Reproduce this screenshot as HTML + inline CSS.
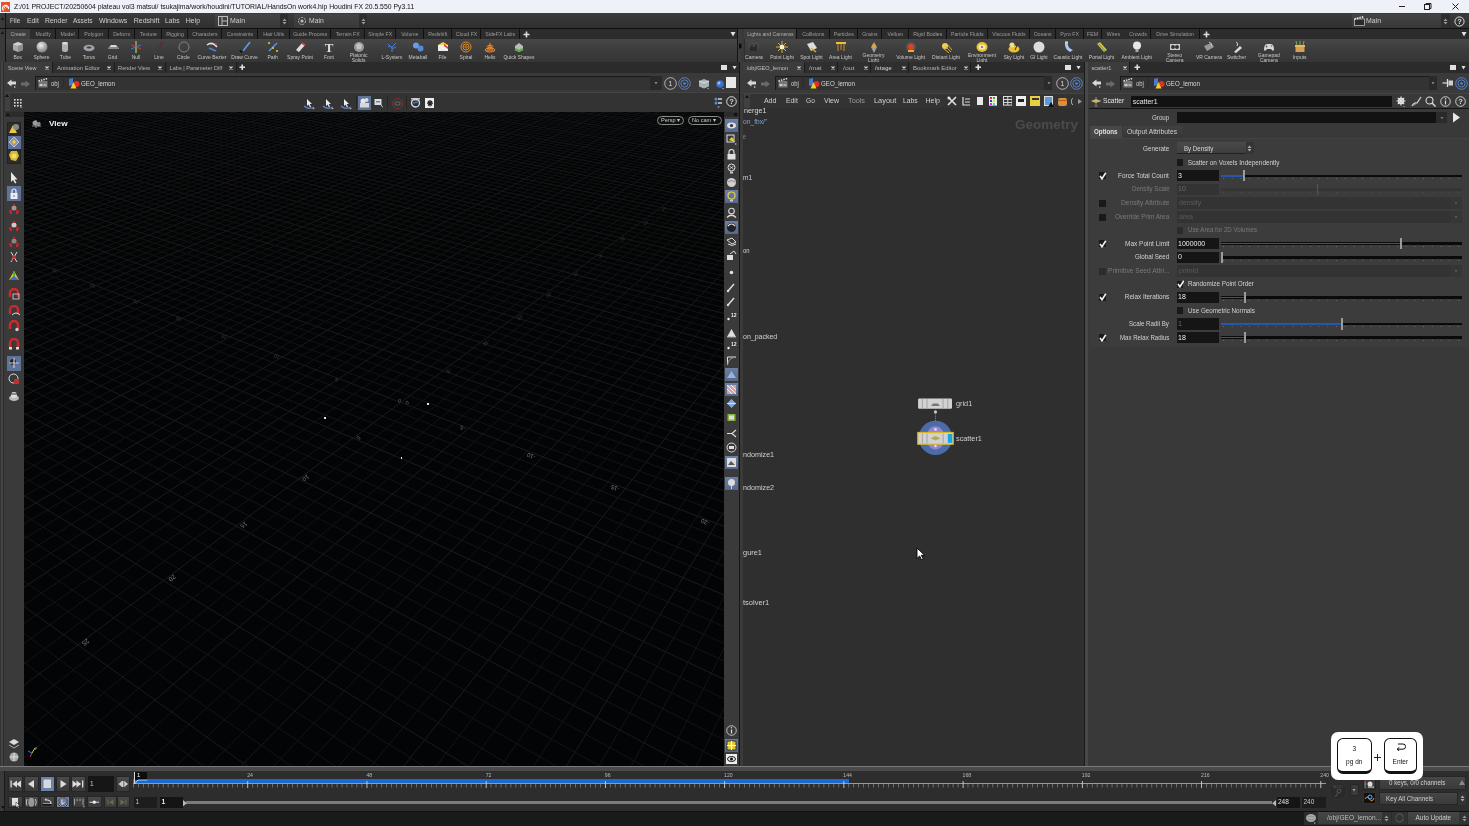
<!DOCTYPE html><html><head><meta charset="utf-8"><style>
html,body{margin:0;padding:0;}
body{width:1469px;height:826px;overflow:hidden;position:relative;background:#3a3a3a;font-family:"Liberation Sans",sans-serif;}
#r>div,#r>svg{position:absolute;box-sizing:border-box;}
#r{position:absolute;left:0;top:0;width:1469px;height:826px;overflow:hidden;will-change:transform;}
</style></head><body><div id="r">
<div style="left:0px;top:0px;width:1469px;height:13px;background:#eef1f7"></div>
<svg style="left:1px;top:1.5px;" width="9" height="10" viewBox="0 0 9 10"><rect x="0" y="0" width="9" height="10" fill="#e5532d"/><path d="M2.5 8.5 A3 3 0 1 1 7.5 7" stroke="#fff" stroke-width="1.2" fill="none"/><path d="M4 6.5 A1.3 1.3 0 1 1 6 6" stroke="#fff" stroke-width="1" fill="none"/></svg>
<div style="left:13.90px;top:0.10px;height:13px;line-height:13px;font-size:7.6px;color:#101010;white-space:nowrap;transform:scaleX(0.901);transform-origin:0 50%;">Z:/01 PROJECT/20250604 plateau vol3 matsui/ tsukajima/work/houdini/TUTORIAL/HandsOn work4.hip   Houdini FX 20.5.550   Py3.11</div>
<div style="left:1399px;top:6px;width:5.5px;height:1px;background:#222"></div>
<svg style="left:1424px;top:3px;" width="8" height="7" viewBox="0 0 8 7"><rect x="0.5" y="1.5" width="5" height="5" fill="none" stroke="#222" stroke-width="1"/><path d="M2 1.5 V0.5 H7 V5.5 H6" fill="none" stroke="#222" stroke-width="1"/></svg>
<svg style="left:1451.5px;top:2.5px;" width="7" height="7" viewBox="0 0 7 7"><path d="M0.5 0.5 L6.5 6.5 M6.5 0.5 L0.5 6.5" stroke="#222" stroke-width="1"/></svg>
<div style="left:0px;top:13px;width:5px;height:798px;background:#3a3a3a"></div>
<div style="left:5px;top:13px;width:1px;height:798px;background:#121212"></div>
<div style="left:6px;top:13px;width:1463px;height:15px;background:linear-gradient(#3b3b3b,#2f2f2f)"></div>
<div style="left:0px;top:28px;width:1469px;height:1.3px;background:#101010"></div>
<div style="left:9.80px;top:14.60px;height:12px;line-height:12px;font-size:7px;color:#cfcfcf;white-space:nowrap;transform:scaleX(0.904);transform-origin:0 50%;">File</div>
<div style="left:26.60px;top:14.60px;height:12px;line-height:12px;font-size:7px;color:#cfcfcf;white-space:nowrap;transform:scaleX(0.978);transform-origin:0 50%;">Edit</div>
<div style="left:44.50px;top:14.60px;height:12px;line-height:12px;font-size:7px;color:#cfcfcf;white-space:nowrap;transform:scaleX(0.980);transform-origin:0 50%;">Render</div>
<div style="left:73.10px;top:14.60px;height:12px;line-height:12px;font-size:7px;color:#cfcfcf;white-space:nowrap;transform:scaleX(0.933);transform-origin:0 50%;">Assets</div>
<div style="left:98.90px;top:14.60px;height:12px;line-height:12px;font-size:7px;color:#cfcfcf;white-space:nowrap;">Windows</div>
<div style="left:133.70px;top:14.60px;height:12px;line-height:12px;font-size:7px;color:#cfcfcf;white-space:nowrap;">Redshift</div>
<div style="left:164.90px;top:14.60px;height:12px;line-height:12px;font-size:7px;color:#cfcfcf;white-space:nowrap;transform:scaleX(0.962);transform-origin:0 50%;">Labs</div>
<div style="left:185.70px;top:14.60px;height:12px;line-height:12px;font-size:7px;color:#cfcfcf;white-space:nowrap;">Help</div>
<div style="left:214.7px;top:13.7px;width:65.60000000000002px;height:14.100000000000001px;background:linear-gradient(#444,#383838)"></div>
<div style="left:280.3px;top:13.7px;width:7.899999999999977px;height:14.100000000000001px;background:#2e2e2e"></div>
<svg style="left:282.3px;top:17.7px;" width="5" height="7" viewBox="0 0 5 7"><path d="M0.5 3 L2.5 0.5 L4.5 3 Z M0.5 4 L2.5 6.5 L4.5 4 Z" fill="#9a9a9a"/></svg>
<div style="left:230.00px;top:14.95px;height:12px;line-height:12px;font-size:7px;color:#cfcfcf;white-space:nowrap;transform:scaleX(0.989);transform-origin:0 50%;">Main</div>

<svg style="left:217.5px;top:16px;" width="10" height="10" viewBox="0 0 10 10"><rect x="0.5" y="0.5" width="9" height="9" fill="none" stroke="#bbb"/><path d="M4 0.5 V9.5 M4 5 H9.5" stroke="#bbb"/></svg>
<div style="left:293.7px;top:13.7px;width:65.0px;height:14.100000000000001px;background:linear-gradient(#444,#383838)"></div>
<div style="left:358.7px;top:13.7px;width:8.0px;height:14.100000000000001px;background:#2e2e2e"></div>
<svg style="left:360.7px;top:17.7px;" width="5" height="7" viewBox="0 0 5 7"><path d="M0.5 3 L2.5 0.5 L4.5 3 Z M0.5 4 L2.5 6.5 L4.5 4 Z" fill="#9a9a9a"/></svg>
<div style="left:308.50px;top:14.95px;height:12px;line-height:12px;font-size:7px;color:#cfcfcf;white-space:nowrap;transform:scaleX(0.969);transform-origin:0 50%;">Main</div>

<svg style="left:296.5px;top:16px;" width="10" height="10" viewBox="0 0 10 10"><circle cx="5" cy="5" r="3.5" fill="none" stroke="#bbb" stroke-dasharray="2 1"/><circle cx="5" cy="5" r="1.6" fill="#bbb"/></svg>
<div style="left:1351.9px;top:14px;width:89.09999999999991px;height:13.7px;background:linear-gradient(#444,#383838)"></div>
<div style="left:1441px;top:14px;width:8.700000000000045px;height:13.7px;background:#2e2e2e"></div>
<svg style="left:1443px;top:18px;" width="5" height="7" viewBox="0 0 5 7"><path d="M0.5 3 L2.5 0.5 L4.5 3 Z M0.5 4 L2.5 6.5 L4.5 4 Z" fill="#9a9a9a"/></svg>
<div style="left:1366.30px;top:15.05px;height:12px;line-height:12px;font-size:7px;color:#cfcfcf;white-space:nowrap;transform:scaleX(0.989);transform-origin:0 50%;">Main</div>

<svg style="left:1353.5px;top:16px;" width="11" height="10" viewBox="0 0 11 10"><rect x="0.5" y="3" width="10" height="6.5" fill="#2a2a2a" stroke="#bbb" stroke-width="0.8"/><path d="M0.5 3 L10 0.8" stroke="#ddd" stroke-width="2" stroke-dasharray="1.5 1"/></svg>
<svg style="left:1454px;top:15.5px;" width="11" height="11" viewBox="0 0 11 11"><circle cx="5.5" cy="5.5" r="4.6" fill="none" stroke="#ddd" stroke-width="1"/><text x="5.5" y="8.4" font-size="7.5" font-weight="bold" text-anchor="middle" fill="#ddd" font-family="Liberation Sans">?</text></svg>
<div style="left:6px;top:29.3px;width:731px;height:9.5px;background:#2c2c2c"></div>
<div style="left:6px;top:38.8px;width:731px;height:23.2px;background:linear-gradient(#474747,#3a3a3a 60%,#353535)"></div>
<div style="left:737px;top:29.3px;width:1.2px;height:32.7px;background:#151515"></div>
<div style="left:738.2px;top:29.3px;width:5.5px;height:32.7px;background:linear-gradient(90deg,#3e3e3e,#383838)"></div>
<svg style="left:739.3px;top:43px;" width="2.5" height="6" viewBox="0 0 2.5 6"><path d="M0 0 L2.5 1.2 V4.8 L0 6Z" fill="#0a0a0a"/></svg>
<div style="left:743.7px;top:29.3px;width:725.3px;height:9.5px;background:#2c2c2c"></div>
<div style="left:743.7px;top:38.8px;width:725.3px;height:23.2px;background:linear-gradient(#474747,#3a3a3a 60%,#353535)"></div>
<div style="left:743.5px;top:29.3px;width:0.8px;height:32.7px;background:#2e2e2e"></div>
<svg style="left:1.3px;top:17px;" width="3" height="3" viewBox="0 0 3 3"><path d="M0 3 L1.5 0 L3 3Z" fill="#111"/></svg>
<svg style="left:1.3px;top:31px;" width="3" height="3" viewBox="0 0 3 3"><path d="M0 3 L1.5 0 L3 3Z" fill="#111"/></svg>
<div style="left:6.1px;top:29.3px;width:24.200000000000003px;height:9.499999999999996px;background:#3e3e3e"></div>
<div style="left:29.7px;top:29.3px;width:1.3px;height:9.499999999999996px;background:#101010"></div>
<div style="left:8.40px;width:19.61px;top:29.35px;height:10px;line-height:10px;font-size:5.2px;color:#b0b0b0;white-space:nowrap;text-align:center;">Create</div>
<div style="left:30.3px;top:29.3px;width:25.7px;height:9.499999999999996px;background:#2c2c2c"></div>
<div style="left:55.4px;top:29.3px;width:1.3px;height:9.499999999999996px;background:#101010"></div>
<div style="left:33.49px;width:19.31px;top:29.35px;height:10px;line-height:10px;font-size:5.2px;color:#9c9c9c;white-space:nowrap;text-align:center;">Modify</div>
<div style="left:56px;top:29.3px;width:23px;height:9.499999999999996px;background:#2c2c2c"></div>
<div style="left:78.4px;top:29.3px;width:1.3px;height:9.499999999999996px;background:#101010"></div>
<div style="left:58.42px;width:18.16px;top:29.35px;height:10px;line-height:10px;font-size:5.2px;color:#9c9c9c;white-space:nowrap;text-align:center;">Model</div>
<div style="left:79px;top:29.3px;width:29.5px;height:9.499999999999996px;background:#2c2c2c"></div>
<div style="left:107.9px;top:29.3px;width:1.3px;height:9.499999999999996px;background:#101010"></div>
<div style="left:82.35px;width:22.79px;top:29.35px;height:10px;line-height:10px;font-size:5.2px;color:#9c9c9c;white-space:nowrap;text-align:center;">Polygon</div>
<div style="left:108.5px;top:29.3px;width:26.5px;height:9.499999999999996px;background:#2c2c2c"></div>
<div style="left:134.4px;top:29.3px;width:1.3px;height:9.499999999999996px;background:#101010"></div>
<div style="left:111.23px;width:21.05px;top:29.35px;height:10px;line-height:10px;font-size:5.2px;color:#9c9c9c;white-space:nowrap;text-align:center;">Deform</div>
<div style="left:135px;top:29.3px;width:27px;height:9.499999999999996px;background:#2c2c2c"></div>
<div style="left:161.4px;top:29.3px;width:1.3px;height:9.499999999999996px;background:#101010"></div>
<div style="left:137.97px;width:21.05px;top:29.35px;height:10px;line-height:10px;font-size:5.2px;color:#9c9c9c;white-space:nowrap;text-align:center;">Texture</div>
<div style="left:162px;top:29.3px;width:26px;height:9.499999999999996px;background:#2c2c2c"></div>
<div style="left:187.4px;top:29.3px;width:1.3px;height:9.499999999999996px;background:#101010"></div>
<div style="left:164.18px;width:21.63px;top:29.35px;height:10px;line-height:10px;font-size:5.2px;color:#9c9c9c;white-space:nowrap;text-align:center;">Rigging</div>
<div style="left:188px;top:29.3px;width:34px;height:9.499999999999996px;background:#2c2c2c"></div>
<div style="left:221.4px;top:29.3px;width:1.3px;height:9.499999999999996px;background:#101010"></div>
<div style="left:190.29px;width:29.43px;top:29.35px;height:10px;line-height:10px;font-size:5.2px;color:#9c9c9c;white-space:nowrap;text-align:center;">Characters</div>
<div style="left:222px;top:29.3px;width:35.89999999999998px;height:9.499999999999996px;background:#2c2c2c"></div>
<div style="left:257.29999999999995px;top:29.3px;width:1.3px;height:9.499999999999996px;background:#101010"></div>
<div style="left:224.80px;width:30.30px;top:29.35px;height:10px;line-height:10px;font-size:5.2px;color:#9c9c9c;white-space:nowrap;text-align:center;">Constraints</div>
<div style="left:257.9px;top:29.3px;width:31.600000000000023px;height:9.499999999999996px;background:#2c2c2c"></div>
<div style="left:288.9px;top:29.3px;width:1.3px;height:9.499999999999996px;background:#101010"></div>
<div style="left:261.16px;width:25.09px;top:29.35px;height:10px;line-height:10px;font-size:5.2px;color:#9c9c9c;white-space:nowrap;text-align:center;">Hair Utils</div>
<div style="left:289.5px;top:29.3px;width:41.5px;height:9.499999999999996px;background:#2c2c2c"></div>
<div style="left:330.4px;top:29.3px;width:1.3px;height:9.499999999999996px;background:#101010"></div>
<div style="left:291.20px;width:38.10px;top:29.35px;height:10px;line-height:10px;font-size:5.2px;color:#9c9c9c;white-space:nowrap;text-align:center;">Guide Process</div>
<div style="left:331px;top:29.3px;width:33.5px;height:9.499999999999996px;background:#2c2c2c"></div>
<div style="left:363.9px;top:29.3px;width:1.3px;height:9.499999999999996px;background:#101010"></div>
<div style="left:333.76px;width:27.98px;top:29.35px;height:10px;line-height:10px;font-size:5.2px;color:#9c9c9c;white-space:nowrap;text-align:center;">Terrain FX</div>
<div style="left:364.5px;top:29.3px;width:31.5px;height:9.499999999999996px;background:#2c2c2c"></div>
<div style="left:395.4px;top:29.3px;width:1.3px;height:9.499999999999996px;background:#101010"></div>
<div style="left:366.26px;width:27.98px;top:29.35px;height:10px;line-height:10px;font-size:5.2px;color:#9c9c9c;white-space:nowrap;text-align:center;">Simple FX</div>
<div style="left:396px;top:29.3px;width:27.69999999999999px;height:9.499999999999996px;background:#2c2c2c"></div>
<div style="left:423.09999999999997px;top:29.3px;width:1.3px;height:9.499999999999996px;background:#101010"></div>
<div style="left:399.18px;width:21.34px;top:29.35px;height:10px;line-height:10px;font-size:5.2px;color:#9c9c9c;white-space:nowrap;text-align:center;">Volume</div>
<div style="left:423.7px;top:29.3px;width:28.30000000000001px;height:9.499999999999996px;background:#2c2c2c"></div>
<div style="left:451.4px;top:29.3px;width:1.3px;height:9.499999999999996px;background:#101010"></div>
<div style="left:426.31px;width:23.08px;top:29.35px;height:10px;line-height:10px;font-size:5.2px;color:#9c9c9c;white-space:nowrap;text-align:center;">Redshift</div>
<div style="left:452px;top:29.3px;width:29px;height:9.499999999999996px;background:#2c2c2c"></div>
<div style="left:480.4px;top:29.3px;width:1.3px;height:9.499999999999996px;background:#101010"></div>
<div style="left:453.66px;width:25.68px;top:29.35px;height:10px;line-height:10px;font-size:5.2px;color:#9c9c9c;white-space:nowrap;text-align:center;">Cloud FX</div>
<div style="left:481px;top:29.3px;width:38.39999999999998px;height:9.499999999999996px;background:#2c2c2c"></div>
<div style="left:518.8px;top:29.3px;width:1.3px;height:9.499999999999996px;background:#101010"></div>
<div style="left:483.31px;width:33.77px;top:29.35px;height:10px;line-height:10px;font-size:5.2px;color:#9c9c9c;white-space:nowrap;text-align:center;">SideFX Labs</div>
<div style="left:743.8px;top:29.3px;width:53.200000000000045px;height:9.499999999999996px;background:#3e3e3e"></div>
<div style="left:796.4px;top:29.3px;width:1.3px;height:9.499999999999996px;background:#101010"></div>
<div style="left:745.13px;width:50.53px;top:29.35px;height:10px;line-height:10px;font-size:5.2px;color:#b0b0b0;white-space:nowrap;text-align:center;">Lights and Cameras</div>
<div style="left:797px;top:29.3px;width:32.60000000000002px;height:9.499999999999996px;background:#2c2c2c"></div>
<div style="left:829.0px;top:29.3px;width:1.3px;height:9.499999999999996px;background:#101010"></div>
<div style="left:800.17px;width:26.25px;top:29.35px;height:10px;line-height:10px;font-size:5.2px;color:#9c9c9c;white-space:nowrap;text-align:center;">Collisions</div>
<div style="left:829.6px;top:29.3px;width:28.399999999999977px;height:9.499999999999996px;background:#2c2c2c"></div>
<div style="left:857.4px;top:29.3px;width:1.3px;height:9.499999999999996px;background:#101010"></div>
<div style="left:831.83px;width:23.94px;top:29.35px;height:10px;line-height:10px;font-size:5.2px;color:#9c9c9c;white-space:nowrap;text-align:center;">Particles</div>
<div style="left:858px;top:29.3px;width:24px;height:9.499999999999996px;background:#2c2c2c"></div>
<div style="left:881.4px;top:29.3px;width:1.3px;height:9.499999999999996px;background:#101010"></div>
<div style="left:860.34px;width:19.31px;top:29.35px;height:10px;line-height:10px;font-size:5.2px;color:#9c9c9c;white-space:nowrap;text-align:center;">Grains</div>
<div style="left:882px;top:29.3px;width:26.700000000000045px;height:9.499999999999996px;background:#2c2c2c"></div>
<div style="left:908.1px;top:29.3px;width:1.3px;height:9.499999999999996px;background:#101010"></div>
<div style="left:885.55px;width:19.61px;top:29.35px;height:10px;line-height:10px;font-size:5.2px;color:#9c9c9c;white-space:nowrap;text-align:center;">Vellum</div>
<div style="left:908.7px;top:29.3px;width:38.09999999999991px;height:9.499999999999996px;background:#2c2c2c"></div>
<div style="left:946.1999999999999px;top:29.3px;width:1.3px;height:9.499999999999996px;background:#101010"></div>
<div style="left:911.15px;width:33.19px;top:29.35px;height:10px;line-height:10px;font-size:5.2px;color:#9c9c9c;white-space:nowrap;text-align:center;">Rigid Bodies</div>
<div style="left:946.8px;top:29.3px;width:41.0px;height:9.499999999999996px;background:#2c2c2c"></div>
<div style="left:987.1999999999999px;top:29.3px;width:1.3px;height:9.499999999999996px;background:#101010"></div>
<div style="left:948.97px;width:36.65px;top:29.35px;height:10px;line-height:10px;font-size:5.2px;color:#9c9c9c;white-space:nowrap;text-align:center;">Particle Fluids</div>
<div style="left:987.8px;top:29.3px;width:42.200000000000045px;height:9.499999999999996px;background:#2c2c2c"></div>
<div style="left:1029.4px;top:29.3px;width:1.3px;height:9.499999999999996px;background:#101010"></div>
<div style="left:990.19px;width:37.43px;top:29.35px;height:10px;line-height:10px;font-size:5.2px;color:#9c9c9c;white-space:nowrap;text-align:center;">Viscous Fluids</div>
<div style="left:1030px;top:29.3px;width:25.5px;height:9.499999999999996px;background:#2c2c2c"></div>
<div style="left:1054.9px;top:29.3px;width:1.3px;height:9.499999999999996px;background:#101010"></div>
<div style="left:1031.79px;width:21.92px;top:29.35px;height:10px;line-height:10px;font-size:5.2px;color:#9c9c9c;white-space:nowrap;text-align:center;">Oceans</div>
<div style="left:1055.5px;top:29.3px;width:28.09999999999991px;height:9.499999999999996px;background:#2c2c2c"></div>
<div style="left:1083.0px;top:29.3px;width:1.3px;height:9.499999999999996px;background:#101010"></div>
<div style="left:1058.16px;width:22.78px;top:29.35px;height:10px;line-height:10px;font-size:5.2px;color:#9c9c9c;white-space:nowrap;text-align:center;">Pyro FX</div>
<div style="left:1083.6px;top:29.3px;width:17.90000000000009px;height:9.499999999999996px;background:#2c2c2c"></div>
<div style="left:1100.9px;top:29.3px;width:1.3px;height:9.499999999999996px;background:#101010"></div>
<div style="left:1085.06px;width:14.98px;top:29.35px;height:10px;line-height:10px;font-size:5.2px;color:#9c9c9c;white-space:nowrap;text-align:center;">FEM</div>
<div style="left:1101.5px;top:29.3px;width:23.799999999999955px;height:9.499999999999996px;background:#2c2c2c"></div>
<div style="left:1124.7px;top:29.3px;width:1.3px;height:9.499999999999996px;background:#101010"></div>
<div style="left:1104.76px;width:17.29px;top:29.35px;height:10px;line-height:10px;font-size:5.2px;color:#9c9c9c;white-space:nowrap;text-align:center;">Wires</div>
<div style="left:1125.3px;top:29.3px;width:25.5px;height:9.499999999999996px;background:#2c2c2c"></div>
<div style="left:1150.2px;top:29.3px;width:1.3px;height:9.499999999999996px;background:#101010"></div>
<div style="left:1127.24px;width:21.63px;top:29.35px;height:10px;line-height:10px;font-size:5.2px;color:#9c9c9c;white-space:nowrap;text-align:center;">Crowds</div>
<div style="left:1150.8px;top:29.3px;width:48.5px;height:9.499999999999996px;background:#2c2c2c"></div>
<div style="left:1198.7px;top:29.3px;width:1.3px;height:9.499999999999996px;background:#101010"></div>
<div style="left:1154.12px;width:41.86px;top:29.35px;height:10px;line-height:10px;font-size:5.2px;color:#9c9c9c;white-space:nowrap;text-align:center;">Drive Simulation</div>
<svg style="left:523.0px;top:30.5px;" width="7" height="7" viewBox="0 0 7 7"><path d="M3.5 0.5 V6.5 M0.5 3.5 H6.5" stroke="#e0e0e0" stroke-width="1.6"/></svg>
<svg style="left:729.5px;top:31.0px;" width="6" height="6" viewBox="0 0 6 6"><path d="M0.5 1 H5.5 L3.0 5.5Z" fill="#e0e0e0"/></svg>
<svg style="left:1203.0px;top:30.5px;" width="7" height="7" viewBox="0 0 7 7"><path d="M3.5 0.5 V6.5 M0.5 3.5 H6.5" stroke="#e0e0e0" stroke-width="1.6"/></svg>
<svg style="left:1460.5px;top:31.0px;" width="6" height="6" viewBox="0 0 6 6"><path d="M0.5 1 H5.5 L3.0 5.5Z" fill="#e0e0e0"/></svg>
<svg style="left:11.8px;top:40.5px;" width="12" height="12" viewBox="0 0 12 12"><path d="M1 3 L6 1 L11 3 V9 L6 11 L1 9Z" fill="#a9a9a9"/><path d="M1 3 L6 1 L11 3 L6 5Z" fill="#d0d0d0"/><path d="M6 5 V11 L11 9 V3Z" fill="#8d8d8d"/></svg>
<div style="left:11.49px;width:12.62px;top:52.20px;height:10px;line-height:10px;font-size:5px;color:#c8c8c8;white-space:nowrap;text-align:center;">Box</div>
<svg style="left:35.5px;top:40.5px;" width="12" height="12" viewBox="0 0 12 12"><defs><radialGradient id="gs" cx="0.4" cy="0.35" r="0.7"><stop offset="0" stop-color="#eee"/><stop offset="1" stop-color="#777"/></radialGradient></defs><circle cx="6" cy="6" r="5.5" fill="url(#gs)"/></svg>
<div style="left:31.44px;width:20.12px;top:52.20px;height:10px;line-height:10px;font-size:5px;color:#c8c8c8;white-space:nowrap;text-align:center;">Sphere</div>
<svg style="left:59.400000000000006px;top:40.5px;" width="12" height="12" viewBox="0 0 12 12"><rect x="3" y="1" width="6" height="10" rx="2.5" fill="#aab0b8"/><ellipse cx="6" cy="2.3" rx="3" ry="1.3" fill="#ddd"/></svg>
<div style="left:57.79px;width:15.21px;top:52.20px;height:10px;line-height:10px;font-size:5px;color:#c8c8c8;white-space:nowrap;text-align:center;">Tube</div>
<svg style="left:83px;top:40.5px;" width="12" height="12" viewBox="0 0 12 12"><ellipse cx="6" cy="7" rx="5.5" ry="3.3" fill="#9da3a9"/><ellipse cx="6" cy="6.5" rx="2.5" ry="1.1" fill="#3d3d3d"/></svg>
<div style="left:80.89px;width:16.23px;top:52.20px;height:10px;line-height:10px;font-size:5px;color:#c8c8c8;white-space:nowrap;text-align:center;">Torus</div>
<svg style="left:106.5px;top:40.5px;" width="12" height="12" viewBox="0 0 12 12"><path d="M2 6.5 L4 4 H9 L11 6.5Z" fill="#d7d7d7"/><rect x="1" y="6.5" width="11" height="1.5" fill="#888"/></svg>
<div style="left:105.78px;width:13.45px;top:52.20px;height:10px;line-height:10px;font-size:5px;color:#c8c8c8;white-space:nowrap;text-align:center;">Grid</div>
<svg style="left:130px;top:40.5px;" width="12" height="12" viewBox="0 0 12 12"><path d="M6 0 V12" stroke="#e3d23a" stroke-width="1"/><path d="M1 4 L11 8" stroke="#e03030" stroke-width="1"/><path d="M1 8 L11 4" stroke="#3a7ae0" stroke-width="1"/><path d="M6 6 V12" stroke="#50c040" stroke-width="1"/></svg>
<div style="left:129.69px;width:12.61px;top:52.20px;height:10px;line-height:10px;font-size:5px;color:#c8c8c8;white-space:nowrap;text-align:center;">Null</div>
<svg style="left:153px;top:40.5px;" width="12" height="12" viewBox="0 0 12 12"><path d="M2 11 L10 1" stroke="#333" stroke-width="2"/><path d="M2 11 L10 1" stroke="#d03030" stroke-width="0.9" stroke-dasharray="1.5 1.5"/></svg>
<div style="left:152.27px;width:13.45px;top:52.20px;height:10px;line-height:10px;font-size:5px;color:#c8c8c8;white-space:nowrap;text-align:center;">Line</div>
<svg style="left:177.5px;top:40.5px;" width="12" height="12" viewBox="0 0 12 12"><circle cx="6" cy="6" r="5" fill="none" stroke="#8a8a8a" stroke-width="0.9"/></svg>
<div style="left:175.11px;width:16.78px;top:52.20px;height:10px;line-height:10px;font-size:5px;color:#c8c8c8;white-space:nowrap;text-align:center;">Circle</div>
<svg style="left:206px;top:40.5px;" width="12" height="12" viewBox="0 0 12 12"><path d="M1 4 Q6 0 11 6" stroke="#ddd" stroke-width="1.5" fill="none"/><path d="M3 7 L10 10" stroke="#4a86d8" stroke-width="1.5"/><circle cx="10" cy="3" r="1" fill="#d33"/></svg>
<div style="left:195.55px;width:32.90px;top:52.20px;height:10px;line-height:10px;font-size:5px;color:#c8c8c8;white-space:nowrap;text-align:center;">Curve Bezier</div>
<svg style="left:238.5px;top:40.5px;" width="12" height="12" viewBox="0 0 12 12"><path d="M1 9 Q2 13 4 9" stroke="#111" stroke-width="1.3" fill="none"/><path d="M4 10 L11 1" stroke="#5a96e8" stroke-width="1.8"/></svg>
<div style="left:229.30px;width:30.39px;top:52.20px;height:10px;line-height:10px;font-size:5px;color:#c8c8c8;white-space:nowrap;text-align:center;">Draw Curve</div>
<svg style="left:266.7px;top:40.5px;" width="12" height="12" viewBox="0 0 12 12"><path d="M2 10 L10 2" stroke="#5a96e8" stroke-width="1.5"/><circle cx="2" cy="2" r="1" fill="#e8d030"/><circle cx="6" cy="7" r="1" fill="#e8d030"/><circle cx="10" cy="10" r="1" fill="#e8d030"/></svg>
<div style="left:265.56px;width:14.29px;top:52.20px;height:10px;line-height:10px;font-size:5px;color:#c8c8c8;white-space:nowrap;text-align:center;">Path</div>
<svg style="left:294px;top:40.5px;" width="12" height="12" viewBox="0 0 12 12"><path d="M2 9 L8 2 L11 4 L5 11Z" fill="#ddd"/><path d="M8 2 L11 4" stroke="#d33" stroke-width="2"/></svg>
<div style="left:285.08px;width:29.85px;top:52.20px;height:10px;line-height:10px;font-size:5px;color:#c8c8c8;white-space:nowrap;text-align:center;">Spray Point</div>
<svg style="left:323px;top:40.5px;" width="12" height="12" viewBox="0 0 12 12"><text x="6" y="11" font-size="13" font-family="Liberation Serif" font-weight="bold" text-anchor="middle" fill="#ddd">T</text></svg>
<div style="left:322.00px;width:14.00px;top:52.20px;height:10px;line-height:10px;font-size:5px;color:#c8c8c8;white-space:nowrap;text-align:center;">Font</div>
<svg style="left:352.6px;top:40.5px;" width="12" height="12" viewBox="0 0 12 12"><circle cx="6" cy="6" r="5" fill="#999"/><path d="M3 4 L6 2 L9 4 L8 8 L4 8Z" fill="#c4c4c4"/></svg>
<div style="left:347.71px;width:21.79px;top:49.80px;height:10px;line-height:10px;font-size:5px;color:#c8c8c8;white-space:nowrap;text-align:center;">Platonic</div>
<div style="left:349.79px;width:17.62px;top:54.60px;height:10px;line-height:10px;font-size:5px;color:#c8c8c8;white-space:nowrap;text-align:center;">Solids</div>
<svg style="left:386px;top:40.5px;" width="12" height="12" viewBox="0 0 12 12"><path d="M6 11 V5 M6 7 L2 3 M6 6 L10 2 M6 8 L10 6 M4 5 L2 6" stroke="#4a7ee0" stroke-width="1" fill="none"/></svg>
<div style="left:379.44px;width:25.11px;top:52.20px;height:10px;line-height:10px;font-size:5px;color:#c8c8c8;white-space:nowrap;text-align:center;">L-System</div>
<svg style="left:412px;top:40.5px;" width="12" height="12" viewBox="0 0 12 12"><circle cx="4" cy="4.5" r="3" fill="#6b9be8"/><circle cx="8.5" cy="7.5" r="3" fill="#5888d8"/></svg>
<div style="left:406.55px;width:22.90px;top:52.20px;height:10px;line-height:10px;font-size:5px;color:#c8c8c8;white-space:nowrap;text-align:center;">Metaball</div>
<svg style="left:436.5px;top:40.5px;" width="12" height="12" viewBox="0 0 12 12"><path d="M1 4 H11 V10 H1Z" fill="#eee"/><path d="M1 4 L6 1 L11 4" fill="#f5d050"/><path d="M7 3 L11 6 V8 L7 5Z" fill="#d33"/></svg>
<div style="left:436.47px;width:12.06px;top:52.20px;height:10px;line-height:10px;font-size:5px;color:#c8c8c8;white-space:nowrap;text-align:center;">File</div>
<svg style="left:460px;top:40.5px;" width="12" height="12" viewBox="0 0 12 12"><circle cx="6" cy="6" r="5" fill="none" stroke="#e08a20" stroke-width="1"/><circle cx="6" cy="6" r="3" fill="none" stroke="#e08a20" stroke-width="1"/><circle cx="6" cy="6" r="1.2" fill="none" stroke="#e08a20" stroke-width="0.8"/></svg>
<div style="left:457.61px;width:16.78px;top:52.20px;height:10px;line-height:10px;font-size:5px;color:#c8c8c8;white-space:nowrap;text-align:center;">Spiral</div>
<svg style="left:484px;top:40.5px;" width="12" height="12" viewBox="0 0 12 12"><path d="M6 1 L2 10 H10Z" fill="#b86a20"/><ellipse cx="6" cy="9" rx="5" ry="2" fill="none" stroke="#e09040" stroke-width="1"/><ellipse cx="6" cy="5.5" rx="3" ry="1.2" fill="none" stroke="#e09040" stroke-width="0.8"/></svg>
<div style="left:482.44px;width:15.11px;top:52.20px;height:10px;line-height:10px;font-size:5px;color:#c8c8c8;white-space:nowrap;text-align:center;">Helix</div>
<svg style="left:513px;top:40.5px;" width="12" height="12" viewBox="0 0 12 12"><path d="M2 5 L6 2 L10 5 V9 L6 11 L2 9Z" fill="#bbb"/><path d="M2 8 L6 10 L10 8" stroke="#5ab040" stroke-width="2" fill="none"/></svg>
<div style="left:501.44px;width:35.13px;top:52.20px;height:10px;line-height:10px;font-size:5px;color:#c8c8c8;white-space:nowrap;text-align:center;">Quick Shapes</div>
<svg style="left:748px;top:40.5px;" width="12" height="12" viewBox="0 0 12 12"><circle cx="4" cy="5" r="2.5" fill="#333" stroke="#555"/><circle cx="8" cy="5" r="2.5" fill="#333" stroke="#555"/><rect x="2" y="6" width="7" height="4" fill="#2a2a2a"/></svg>
<div style="left:743.11px;width:21.78px;top:52.20px;height:10px;line-height:10px;font-size:5px;color:#c8c8c8;white-space:nowrap;text-align:center;">Camera</div>
<svg style="left:776px;top:40.5px;" width="12" height="12" viewBox="0 0 12 12"><circle cx="6" cy="6" r="2.5" fill="#f4f0c0"/><path d="M6 0 V3 M6 9 V12 M0 6 H3 M9 6 H12 M2 2 L4 4 M10 2 L8 4 M2 10 L4 8 M10 10 L8 8" stroke="#f0c020" stroke-width="0.9"/></svg>
<div style="left:768.19px;width:27.63px;top:52.20px;height:10px;line-height:10px;font-size:5px;color:#c8c8c8;white-space:nowrap;text-align:center;">Point Light</div>
<svg style="left:805.5px;top:40.5px;" width="12" height="12" viewBox="0 0 12 12"><path d="M1 3 L7 1 L11 7 L5 10Z" fill="#ddd"/><path d="M5 7 L10 11" stroke="#e0b020" stroke-width="1.5"/></svg>
<div style="left:798.24px;width:26.52px;top:52.20px;height:10px;line-height:10px;font-size:5px;color:#c8c8c8;white-space:nowrap;text-align:center;">Spot Light</div>
<svg style="left:834.5px;top:40.5px;" width="12" height="12" viewBox="0 0 12 12"><rect x="1" y="1" width="10" height="2" fill="#e8c040"/><path d="M3 3 V10 M9 3 V10 M6 3 V9" stroke="#c89020" stroke-width="1"/></svg>
<div style="left:827.10px;width:26.79px;top:52.20px;height:10px;line-height:10px;font-size:5px;color:#c8c8c8;white-space:nowrap;text-align:center;">Area Light</div>
<svg style="left:867.5px;top:40.5px;" width="12" height="12" viewBox="0 0 12 12"><path d="M6 1 L9 6 L6 12 L3 6Z" fill="#a0a0a0"/><circle cx="6" cy="5" r="2" fill="#e8a030"/></svg>
<div style="left:860.53px;width:25.95px;top:49.80px;height:10px;line-height:10px;font-size:5px;color:#c8c8c8;white-space:nowrap;text-align:center;">Geometry</div>
<div style="left:866.08px;width:14.84px;top:54.60px;height:10px;line-height:10px;font-size:5px;color:#c8c8c8;white-space:nowrap;text-align:center;">Light</div>
<svg style="left:904.6px;top:40.5px;" width="12" height="12" viewBox="0 0 12 12"><circle cx="6" cy="6" r="5" fill="#555"/><circle cx="6" cy="6" r="3" fill="#e04020"/><rect x="3" y="9" width="6" height="2" fill="#e0b030"/></svg>
<div style="left:894.15px;width:32.91px;top:52.20px;height:10px;line-height:10px;font-size:5px;color:#c8c8c8;white-space:nowrap;text-align:center;">Volume Light</div>
<svg style="left:940px;top:40.5px;" width="12" height="12" viewBox="0 0 12 12"><circle cx="5" cy="5" r="3" fill="#f0d050"/><path d="M5 5 L11 11 M3 7 L9 12 M7 3 L12 9" stroke="#e0b020" stroke-width="1"/></svg>
<div style="left:930.10px;width:31.79px;top:52.20px;height:10px;line-height:10px;font-size:5px;color:#c8c8c8;white-space:nowrap;text-align:center;">Distant Light</div>
<svg style="left:976px;top:40.5px;" width="12" height="12" viewBox="0 0 12 12"><ellipse cx="6" cy="6" rx="5.5" ry="5" fill="#e8c030"/><ellipse cx="6" cy="6" rx="3.5" ry="2.5" fill="#f8f0c0"/><circle cx="6" cy="6" r="1.3" fill="#888"/></svg>
<div style="left:965.97px;width:32.07px;top:49.80px;height:10px;line-height:10px;font-size:5px;color:#c8c8c8;white-space:nowrap;text-align:center;">Environment</div>
<div style="left:974.58px;width:14.84px;top:54.60px;height:10px;line-height:10px;font-size:5px;color:#c8c8c8;white-space:nowrap;text-align:center;">Light</div>
<svg style="left:1007.8px;top:40.5px;" width="12" height="12" viewBox="0 0 12 12"><ellipse cx="6" cy="8" rx="5.5" ry="3.5" fill="#e8c030"/><circle cx="4" cy="4" r="2.5" fill="#f0e080"/><path d="M7 9 L10 2" stroke="#333" stroke-width="1"/></svg>
<div style="left:1001.52px;width:24.57px;top:52.20px;height:10px;line-height:10px;font-size:5px;color:#c8c8c8;white-space:nowrap;text-align:center;">Sky Light</div>
<svg style="left:1033px;top:40.5px;" width="12" height="12" viewBox="0 0 12 12"><circle cx="6" cy="6" r="5.5" fill="#dcdcdc"/></svg>
<div style="left:1028.25px;width:21.51px;top:52.20px;height:10px;line-height:10px;font-size:5px;color:#c8c8c8;white-space:nowrap;text-align:center;">GI Light</div>
<svg style="left:1062px;top:40.5px;" width="12" height="12" viewBox="0 0 12 12"><path d="M3 1 Q2 8 8 11 L11 9 Q5 7 6 1Z" fill="#a8c8f0"/><path d="M3 1 L6 1" stroke="#eee"/></svg>
<div style="left:1051.55px;width:32.90px;top:52.20px;height:10px;line-height:10px;font-size:5px;color:#c8c8c8;white-space:nowrap;text-align:center;">Caustic Light</div>
<svg style="left:1095.5px;top:40.5px;" width="12" height="12" viewBox="0 0 12 12"><path d="M1 3 L4 1 L11 9 L8 11Z" fill="#d8c040"/><path d="M3 3 L9 10" stroke="#60a040" stroke-width="1"/></svg>
<div style="left:1086.85px;width:29.29px;top:52.20px;height:10px;line-height:10px;font-size:5px;color:#c8c8c8;white-space:nowrap;text-align:center;">Portal Light</div>
<svg style="left:1130.7px;top:40.5px;" width="12" height="12" viewBox="0 0 12 12"><circle cx="6" cy="4.5" r="4" fill="#e6e6e6"/><rect x="4.5" y="8" width="3" height="3" fill="#aaa"/></svg>
<div style="left:1119.41px;width:34.57px;top:52.20px;height:10px;line-height:10px;font-size:5px;color:#c8c8c8;white-space:nowrap;text-align:center;">Ambient Light</div>
<svg style="left:1168.6px;top:40.5px;" width="12" height="12" viewBox="0 0 12 12"><rect x="1" y="3" width="10" height="6" fill="#ccc"/><circle cx="4" cy="6" r="2" fill="#333"/><circle cx="8" cy="6" r="2" fill="#333"/></svg>
<div style="left:1165.23px;width:18.73px;top:49.80px;height:10px;line-height:10px;font-size:5px;color:#c8c8c8;white-space:nowrap;text-align:center;">Stereo</div>
<div style="left:1163.71px;width:21.78px;top:54.60px;height:10px;line-height:10px;font-size:5px;color:#c8c8c8;white-space:nowrap;text-align:center;">Camera</div>
<svg style="left:1203px;top:40.5px;" width="12" height="12" viewBox="0 0 12 12"><path d="M1 5 L8 2 L11 6 L4 10Z" fill="#999"/><path d="M6 1 Q9 2 9 5" stroke="#ccc" fill="none"/></svg>
<div style="left:1193.94px;width:30.12px;top:52.20px;height:10px;line-height:10px;font-size:5px;color:#c8c8c8;white-space:nowrap;text-align:center;">VR Camera</div>
<svg style="left:1230.5px;top:40.5px;" width="12" height="12" viewBox="0 0 12 12"><path d="M3 11 L9 5 L11 7 L5 12Z" fill="#ddd"/><path d="M5 1 Q8 2 6 5" stroke="#ddd" fill="none"/></svg>
<div style="left:1224.91px;width:23.17px;top:52.20px;height:10px;line-height:10px;font-size:5px;color:#c8c8c8;white-space:nowrap;text-align:center;">Switcher</div>
<svg style="left:1262.8px;top:40.5px;" width="12" height="12" viewBox="0 0 12 12"><path d="M1 9 Q1 3 4 3 H8 Q11 3 11 9 Q10 11 8 8 H4 Q2 11 1 9Z" fill="#d8d8d8"/><circle cx="8.5" cy="5" r="0.8" fill="#d33"/><circle cx="3.5" cy="5.5" r="0.9" fill="#555"/></svg>
<div style="left:1255.82px;width:25.96px;top:49.80px;height:10px;line-height:10px;font-size:5px;color:#c8c8c8;white-space:nowrap;text-align:center;">Gamepad</div>
<div style="left:1257.91px;width:21.78px;top:54.60px;height:10px;line-height:10px;font-size:5px;color:#c8c8c8;white-space:nowrap;text-align:center;">Camera</div>
<svg style="left:1293.8px;top:40.5px;" width="12" height="12" viewBox="0 0 12 12"><rect x="1.5" y="5" width="9" height="6" fill="#d8a050"/><rect x="1" y="4" width="10" height="2" fill="#e8b868"/><path d="M3 4 L2 0 M6 4 V0 M9 4 L10 0" stroke="#80b040" stroke-width="1"/></svg>
<div style="left:1290.99px;width:17.62px;top:52.20px;height:10px;line-height:10px;font-size:5px;color:#c8c8c8;white-space:nowrap;text-align:center;">Inputs</div>
<div style="left:0px;top:62px;width:1469px;height:1px;background:#161616"></div>
<div style="left:4px;top:62.3px;width:735px;height:10.6px;background:#2b2b2b"></div>
<div style="left:4px;top:62.3px;width:48.2px;height:10.600000000000009px;background:#3c3c3c"></div>
<div style="left:52.2px;top:62.3px;width:1px;height:10.600000000000009px;background:#1c1c1c"></div>
<div style="left:8.00px;top:62.80px;height:10px;line-height:10px;font-size:5.6px;color:#c0c0c0;white-space:nowrap;transform:scaleX(0.960);transform-origin:0 50%;">Scene View</div>
<svg style="left:45.3px;top:65.6px;" width="4" height="4" viewBox="0 0 4 4"><path d="M0.5 0.5 L3.5 3.5 M3.5 0.5 L0.5 3.5" stroke="#d0d0d0" stroke-width="1.1"/></svg>
<div style="left:53.2px;top:62.3px;width:61.0px;height:10.600000000000009px;background:#2f2f2f"></div>
<div style="left:114.2px;top:62.3px;width:1px;height:10.600000000000009px;background:#1c1c1c"></div>
<div style="left:56.60px;top:62.80px;height:10px;line-height:10px;font-size:5.6px;color:#b4b4b4;white-space:nowrap;transform:scaleX(1.047);transform-origin:0 50%;">Animation Editor</div>
<svg style="left:106.8px;top:65.6px;" width="4" height="4" viewBox="0 0 4 4"><path d="M0.5 0.5 L3.5 3.5 M3.5 0.5 L0.5 3.5" stroke="#d0d0d0" stroke-width="1.1"/></svg>
<div style="left:115.2px;top:62.3px;width:50.10000000000001px;height:10.600000000000009px;background:#2f2f2f"></div>
<div style="left:165.3px;top:62.3px;width:1px;height:10.600000000000009px;background:#1c1c1c"></div>
<div style="left:118.10px;top:62.80px;height:10px;line-height:10px;font-size:5.6px;color:#b4b4b4;white-space:nowrap;">Render View</div>
<svg style="left:158px;top:65.6px;" width="4" height="4" viewBox="0 0 4 4"><path d="M0.5 0.5 L3.5 3.5 M3.5 0.5 L0.5 3.5" stroke="#d0d0d0" stroke-width="1.1"/></svg>
<div style="left:166.3px;top:62.3px;width:70.0px;height:10.600000000000009px;background:#2f2f2f"></div>
<div style="left:236.3px;top:62.3px;width:1px;height:10.600000000000009px;background:#1c1c1c"></div>
<div style="left:169.60px;top:62.80px;height:10px;line-height:10px;font-size:5.6px;color:#b4b4b4;white-space:nowrap;">Labs | Parameter Diff</div>
<svg style="left:228.9px;top:65.6px;" width="4" height="4" viewBox="0 0 4 4"><path d="M0.5 0.5 L3.5 3.5 M3.5 0.5 L0.5 3.5" stroke="#d0d0d0" stroke-width="1.1"/></svg>
<svg style="left:239.45px;top:64.35px;" width="6.5" height="6.5" viewBox="0 0 6.5 6.5"><path d="M3.25 0.5 V6.0 M0.5 3.25 H6.0" stroke="#e0e0e0" stroke-width="1.6"/></svg>
<div style="left:720.5px;top:65px;width:6px;height:5px;background:#e0e0e0"></div>
<svg style="left:731.5px;top:65.1px;" width="5" height="5" viewBox="0 0 5 5"><path d="M0.5 1 H4.5 L2.5 4.5Z" fill="#e0e0e0"/></svg>
<div style="left:4px;top:72.9px;width:735px;height:19px;background:#3a3a3a"></div>
<svg style="left:7px;top:79px;" width="10" height="9" viewBox="0 0 10 9"><path d="M0 4 L4.5 0.5 V2.5 H9 V5.5 H4.5 V7.5Z" fill="#d8d8d8"/><path d="M7 7 L9 8 L7 9Z" fill="#ccc"/></svg>
<svg style="left:21px;top:79.5px;" width="9" height="8" viewBox="0 0 9 8"><path d="M9 4 L4.5 0.5 V2.5 H0 V5.5 H4.5 V7.5Z" fill="#6a6a6a"/></svg>
<div style="left:35px;top:76.4px;width:627px;height:13.199999999999989px;background:#333;border-top:1px solid #1a1a1a;border-left:1px solid #1a1a1a"></div>
<svg style="left:38px;top:78.4px;" width="10" height="10" viewBox="0 0 10 10"><rect x="0.5" y="3" width="9" height="6.5" fill="#777"/><path d="M0.5 3 L9.5 0.5" stroke="#ddd" stroke-width="1.6" stroke-dasharray="1.5 1"/><rect x="1.5" y="6" width="3" height="2" fill="#ccc"/><rect x="5.5" y="6" width="3" height="2" fill="#aaa"/></svg>
<div style="left:50.90px;top:77.50px;height:11px;line-height:11px;font-size:6.3px;color:#d0d0d0;white-space:nowrap;transform:scaleX(0.940);transform-origin:0 50%;">obj</div>
<svg style="left:61px;top:76.4px;" width="4" height="13.199999999999989" viewBox="0 0 4 13.199999999999989"><path d="M0.5 0 L3 6.6 L0.5 13.2" stroke="#222" fill="none" stroke-dasharray="1 1"/></svg>
<svg style="left:68px;top:77.9px;" width="12" height="11" viewBox="0 0 12 11"><path d="M1 1 L5 0 V7 L1 8Z" fill="#4a7ad0"/><circle cx="8.5" cy="6" r="3" fill="#e03020"/><path d="M2.5 10.5 L5.5 4 L8.5 10.5Z" fill="#f0d020"/></svg>
<div style="left:81.00px;top:77.50px;height:11px;line-height:11px;font-size:6.3px;color:#d8d8d8;white-space:nowrap;transform:scaleX(0.981);transform-origin:0 50%;">GEO_lemon</div>
<div style="left:650px;top:76.4px;width:12px;height:13.2px;background:#2a2a2a"></div>
<svg style="left:654.0px;top:81.0px;" width="4" height="4" viewBox="0 0 4 4"><path d="M0.5 1 H3.5 L2.0 3.5Z" fill="#888"/></svg>
<svg style="left:664px;top:77px;" width="13" height="13" viewBox="0 0 13 13"><circle cx="6.5" cy="6.5" r="5.8" fill="none" stroke="#d0d0d0" stroke-width="0.8"/><text x="6.5" y="9" font-size="7" text-anchor="middle" fill="#ddd" font-family="Liberation Sans">1</text></svg>
<svg style="left:678px;top:77px;" width="13" height="13" viewBox="0 0 13 13"><circle cx="6.5" cy="6.5" r="5.8" fill="none" stroke="#5a88d0" stroke-width="0.9"/><circle cx="6.5" cy="6.5" r="3.6" fill="none" stroke="#5a88d0" stroke-width="0.9"/><circle cx="6.5" cy="6.5" r="1.2" fill="#5a88d0"/></svg>
<svg style="left:698px;top:78px;" width="13" height="12" viewBox="0 0 13 12"><path d="M1 3 L6 1 L11 3 V8.5 L6 10.5 L1 8.5Z" fill="#a8b0b8"/><path d="M1 3 L6 5 L11 3" stroke="#e0e0e0" fill="none"/><path d="M9 10 L11 10 L10 11.5Z" fill="#aaa"/></svg>
<svg style="left:714px;top:78px;" width="12" height="12" viewBox="0 0 12 12"><circle cx="6" cy="6" r="3.8" fill="#3a70d0"/><circle cx="5" cy="5" r="1.5" fill="#9cc0f0"/><path d="M8 10 L10 10 L9 11.5Z" fill="#aaa"/></svg>
<div style="left:726px;top:77px;width:10px;height:10.5px;background:#e8e8e8"></div>
<div style="left:4px;top:91.9px;width:735px;height:20.2px;background:#333;border-top:1px solid #444"></div>
<div style="left:4.5px;top:93px;width:5px;height:18px;background:#404040"></div>
<svg style="left:5px;top:94px;" width="4" height="3" viewBox="0 0 4 3"><path d="M0 3 L2 0 L4 3Z" fill="#111"/></svg>
<svg style="left:12.5px;top:98px;" width="10" height="10" viewBox="0 0 10 10"><rect x="1" y="1" width="1.6" height="1.6" fill="#e0e0e0"/><rect x="1" y="4" width="1.6" height="1.6" fill="#e0e0e0"/><rect x="1" y="7" width="1.6" height="1.6" fill="#e0e0e0"/><rect x="4" y="1" width="1.6" height="1.6" fill="#e0e0e0"/><rect x="4" y="4" width="1.6" height="1.6" fill="#e0e0e0"/><rect x="4" y="7" width="1.6" height="1.6" fill="#e0e0e0"/><rect x="7" y="1" width="1.6" height="1.6" fill="#e0e0e0"/><rect x="7" y="4" width="1.6" height="1.6" fill="#e0e0e0"/><rect x="7" y="7" width="1.6" height="1.6" fill="#e0e0e0"/><path d="M7 9 L9.5 9 L8.2 10Z" fill="#aaa"/></svg>
<svg style="left:303px;top:98.5px;" width="13" height="11" viewBox="0 0 13 11"><path d="M4 0 L4 7 L5.5 5.5 L7 8.5 L8 8 L6.7 5 L9 5Z" fill="#eee"/><path d="M1 7 Q5 11 11 8" stroke="#5a8ad8" stroke-width="1.2" fill="none"/><path d="M9 9 L12 9 L10.5 10.5Z" fill="#aaa"/></svg>
<svg style="left:321.6px;top:98.5px;" width="13" height="11" viewBox="0 0 13 11"><path d="M4 0 L4 7 L5.5 5.5 L7 8.5 L8 8 L6.7 5 L9 5Z" fill="#eee"/><path d="M1 7 Q5 11 11 8" stroke="#5a8ad8" stroke-width="1.2" fill="none"/><path d="M9 9 L12 9 L10.5 10.5Z" fill="#aaa"/></svg>
<svg style="left:340px;top:98.5px;" width="13" height="11" viewBox="0 0 13 11"><path d="M4 0 L4 7 L5.5 5.5 L7 8.5 L8 8 L6.7 5 L9 5Z" fill="#eee"/><path d="M1 7 Q5 11 11 8" stroke="#5a8ad8" stroke-width="1.2" fill="none"/><path d="M9 9 L12 9 L10.5 10.5Z" fill="#aaa"/></svg>
<div style="left:355.5px;top:95px;width:1px;height:14px;background:#252525"></div>
<div style="left:357.8px;top:96.1px;width:13.3px;height:13.9px;background:#5f739a"></div>
<svg style="left:359px;top:97px;" width="11" height="12" viewBox="0 0 11 12"><circle cx="4" cy="4" r="2.5" fill="#e8e8e8"/><circle cx="7.5" cy="3" r="2" fill="#ddd"/><rect x="1" y="6" width="9" height="4.5" fill="#d8d8d8"/></svg>
<svg style="left:374.2px;top:98px;" width="9" height="10" viewBox="0 0 9 10"><rect x="0.5" y="1" width="7" height="6" fill="#ddd"/><rect x="2" y="3" width="4" height="1.5" fill="#5a88d0"/><path d="M7 7 L9 9.5" stroke="#ccc"/></svg>
<div style="left:387px;top:95px;width:1px;height:14px;background:#252525"></div>
<svg style="left:391.5px;top:97.5px;" width="11" height="11" viewBox="0 0 11 11"><circle cx="5.5" cy="5.5" r="5" fill="none" stroke="#9a3030" stroke-width="0.9"/><rect x="3" y="4" width="5" height="3" rx="1" fill="none" stroke="#777" stroke-width="0.8"/></svg>
<div style="left:406px;top:95px;width:1px;height:14px;background:#252525"></div>
<svg style="left:410.4px;top:97px;" width="11" height="11" viewBox="0 0 11 11"><circle cx="5.5" cy="6" r="4" fill="none" stroke="#ddd" stroke-width="1.3"/><path d="M3 6 L8 5" stroke="#3a70d0" stroke-width="1.5"/><path d="M1 1.5 H10 M1 3 H10" stroke="#ddd" stroke-width="0.8"/></svg>
<div style="left:424.7px;top:97.7px;width:9.7px;height:10.2px;background:#eee"></div>
<svg style="left:425.5px;top:98.5px;" width="8" height="8.5" viewBox="0 0 8 8.5"><path d="M4 1 V7.5 M1 4.2 H7 M2 2 L6 6.5 M6 2 L2 6.5" stroke="#222" stroke-width="1.2"/></svg>
<svg style="left:713px;top:95.5px;" width="10" height="13" viewBox="0 0 10 13"><circle cx="3" cy="3" r="1.5" fill="#5a8ad8"/><rect x="5" y="2.3" width="4" height="1.4" fill="#ddd"/><circle cx="3" cy="7" r="1.5" fill="#5a8ad8"/><rect x="5" y="6.3" width="4" height="1.4" fill="#ddd"/><path d="M4 10.5 L7 10.5 L5.5 12Z" fill="#aaa"/></svg>
<svg style="left:726px;top:96px;" width="11" height="11" viewBox="0 0 11 11"><circle cx="5.5" cy="5.5" r="4.8" fill="none" stroke="#ddd" stroke-width="1"/><text x="5.5" y="8.3" font-size="7.5" font-weight="bold" text-anchor="middle" fill="#ddd" font-family="Liberation Sans">?</text></svg>
<div style="left:0px;top:62px;width:3.4px;height:704px;background:#444;border-left:1px solid #333"></div>
<div style="left:3.4px;top:62px;width:1px;height:704px;background:#2c2c2c"></div>
<div style="left:4.6px;top:112px;width:19.4px;height:654px;background:#3a3a3a"></div>
<div style="left:4.6px;top:112px;width:19.4px;height:5px;background:#2c2c2c"></div>
<svg style="left:6px;top:113px;" width="4" height="3" viewBox="0 0 4 3"><path d="M0 3 L2 0 L4 3Z" fill="#111"/></svg>
<div style="left:7px;top:121.8px;width:14px;height:41.8px;background:#2c2c2c;border:1px solid #222"></div>
<div style="left:7.5px;top:135.5px;width:13px;height:13.5px;background:#5f739a"></div>
<svg style="left:8px;top:122.69999999999999px;" width="12" height="12" viewBox="0 0 12 12"><path d="M1 10 L5 2 L9 10Z" fill="#e8c840"/><circle cx="8" cy="4" r="3" fill="#888"/></svg>
<svg style="left:8px;top:136.3px;" width="12" height="12" viewBox="0 0 12 12"><path d="M6 1 L11 6 L6 11 L1 6Z" fill="#999" stroke="#ddd" stroke-width="0.7"/><path d="M6 4 L8 6 L6 8 L4 6Z" fill="#f0d040"/></svg>
<svg style="left:8px;top:150px;" width="12" height="12" viewBox="0 0 12 12"><path d="M3 1 L9 1 L11 6 L8 11 L3 10 L1 5Z" fill="#d8b830"/><circle cx="6" cy="6" r="2.5" fill="#f0e060"/></svg>
<svg style="left:8px;top:172px;" width="12" height="12" viewBox="0 0 12 12"><path d="M3 0 V10 L5 8 L7 11.5 L8.5 10.7 L6.5 7.5 L9.5 7.5Z" fill="#e8e8e8"/></svg>
<div style="left:6.5px;top:186.1px;width:14.5px;height:15px;background:#5f739a"></div>
<svg style="left:8px;top:187.6px;" width="12" height="12" viewBox="0 0 12 12"><rect x="2.5" y="5" width="7" height="6" fill="#eee"/><path d="M4 5 V3 A2 2 0 0 1 8 3 V5" stroke="#eee" fill="none" stroke-width="1.2"/><path d="M5 8 H7" stroke="#5f739a"/></svg>
<svg style="left:8px;top:202.5px;" width="12" height="12" viewBox="0 0 12 12"><circle cx="6" cy="5" r="2.5" fill="#999"/><path d="M1 9 L4 7 M11 9 L8 7 M6 1 V3" stroke="#d02020" stroke-width="2"/><path d="M2 10 H4 M8 10 H10" stroke="#e03030" stroke-width="1.5"/></svg>
<svg style="left:8px;top:219.5px;" width="12" height="12" viewBox="0 0 12 12"><circle cx="6" cy="5" r="2.5" fill="#ccc"/><path d="M1 9 L4 7 M11 9 L8 7 M6 1 V3" stroke="#d02020" stroke-width="2"/><path d="M2 10 H4 M8 10 H10" stroke="#e03030" stroke-width="1.5"/></svg>
<svg style="left:8px;top:235.5px;" width="12" height="12" viewBox="0 0 12 12"><circle cx="6" cy="5" r="2.5" fill="#888"/><path d="M1 9 L4 7 M11 9 L8 7 M6 1 V3" stroke="#d02020" stroke-width="2"/><path d="M2 10 H4 M8 10 H10" stroke="#e03030" stroke-width="1.5"/></svg>
<svg style="left:8px;top:251px;" width="12" height="12" viewBox="0 0 12 12"><path d="M3 1 L9 11 M9 1 L3 11" stroke="#e0e0e0" stroke-width="1"/><circle cx="6" cy="6" r="1.8" fill="#d03030"/><circle cx="4" cy="9" r="1" fill="#d03030"/></svg>
<svg style="left:8px;top:269px;" width="12" height="12" viewBox="0 0 12 12"><path d="M1 11 L6 2 L11 11Z" fill="#e8c020"/><path d="M6 2 L6 11" stroke="#40a040" stroke-width="1.5"/><path d="M1 11 L6 7 L11 11" fill="#3070d0"/></svg>
<svg style="left:8px;top:288px;" width="12" height="12" viewBox="0 0 12 12"><path d="M2 9 V5 A4 4 0 0 1 10 5 V9" stroke="#d02828" stroke-width="2.5" fill="none"/><rect x="5" y="6" width="6" height="5" fill="none" stroke="#ddd" stroke-width="0.8"/></svg>
<svg style="left:8px;top:304.7px;" width="12" height="12" viewBox="0 0 12 12"><path d="M2 9 V5 A4 4 0 0 1 10 5 V9" stroke="#d02828" stroke-width="2.5" fill="none"/><path d="M4 10 Q8 6 12 10" stroke="#ddd" fill="none"/></svg>
<svg style="left:8px;top:320px;" width="12" height="12" viewBox="0 0 12 12"><path d="M2 9 V5 A4 4 0 0 1 10 5 V9" stroke="#d02828" stroke-width="2.5" fill="none"/><circle cx="9" cy="9.5" r="1.7" fill="#ccc"/></svg>
<svg style="left:8px;top:337.6px;" width="12" height="12" viewBox="0 0 12 12"><path d="M2 9 V5 A4 4 0 0 1 10 5 V9" stroke="#d02828" stroke-width="2.5" fill="none"/><rect x="1" y="9" width="3" height="2.5" fill="#ddd"/><rect x="8" y="9" width="3" height="2.5" fill="#ddd"/></svg>
<div style="left:6.5px;top:355.5px;width:14.5px;height:15px;background:#5f739a"></div>
<svg style="left:8px;top:357px;" width="12" height="12" viewBox="0 0 12 12"><circle cx="5" cy="5" r="3" fill="#222"/><path d="M1 6 H11 M6 1 V11" stroke="#ccc" stroke-width="1.2"/></svg>
<svg style="left:8px;top:372.5px;" width="12" height="12" viewBox="0 0 12 12"><circle cx="5.5" cy="5.5" r="4.5" fill="none" stroke="#ddd" stroke-width="1"/><rect x="6" y="6" width="5" height="5" fill="#c03030"/></svg>
<svg style="left:8px;top:390px;" width="12" height="12" viewBox="0 0 12 12"><ellipse cx="6" cy="8" rx="5" ry="3" fill="#bbb"/><circle cx="6" cy="5" r="3" fill="#e0e0e0"/><path d="M3 4 L9 4" stroke="#333"/></svg>
<svg style="left:8px;top:737px;" width="12" height="12" viewBox="0 0 12 12"><path d="M1 5 L6 2 L11 5 L6 8Z" fill="#ddd"/><path d="M1 8 L6 11 L11 8" stroke="#aaa" fill="none"/></svg>
<svg style="left:8px;top:751px;" width="12" height="12" viewBox="0 0 12 12"><circle cx="6" cy="6" r="4.5" fill="#aaa"/><path d="M2 6 H10 M6 2 V10" stroke="#ddd"/></svg>
<div style="left:24px;top:112px;width:700px;height:654px;background:#030405"></div>
<svg style="left:24px;top:112px;" width="700" height="654" viewBox="0 0 700 654"><defs><linearGradient id="fade" x1="0" y1="0" x2="0" y2="1"><stop offset="0" stop-color="#000" stop-opacity="0.2"/><stop offset="0.45" stop-color="#000" stop-opacity="0"/></linearGradient></defs><g stroke="#141617" stroke-width="0.9"><line x1="269.7" y1="-78.9" x2="-796.3" y2="149.4"/><line x1="273.6" y1="-78.4" x2="-794.6" y2="152.1"/><line x1="277.6" y1="-77.8" x2="-792.9" y2="154.9"/><line x1="281.5" y1="-77.3" x2="-791.1" y2="157.7"/><line x1="289.5" y1="-76.2" x2="-787.5" y2="163.5"/><line x1="293.5" y1="-75.7" x2="-785.7" y2="166.4"/><line x1="297.6" y1="-75.1" x2="-783.8" y2="169.4"/><line x1="301.7" y1="-74.6" x2="-781.9" y2="172.4"/><line x1="309.9" y1="-73.5" x2="-778.0" y2="178.6"/><line x1="314.1" y1="-72.9" x2="-776.1" y2="181.8"/><line x1="318.2" y1="-72.3" x2="-774.1" y2="185.0"/><line x1="322.5" y1="-71.8" x2="-772.0" y2="188.2"/><line x1="330.9" y1="-70.6" x2="-767.9" y2="194.9"/><line x1="335.2" y1="-70.0" x2="-765.7" y2="198.3"/><line x1="339.5" y1="-69.5" x2="-763.6" y2="201.7"/><line x1="343.9" y1="-68.9" x2="-761.4" y2="205.2"/><line x1="352.6" y1="-67.7" x2="-756.9" y2="212.4"/><line x1="357.1" y1="-67.1" x2="-754.6" y2="216.1"/><line x1="361.5" y1="-66.5" x2="-752.3" y2="219.8"/><line x1="366.0" y1="-65.9" x2="-749.9" y2="223.6"/><line x1="375.0" y1="-64.7" x2="-745.1" y2="231.3"/><line x1="379.6" y1="-64.1" x2="-742.6" y2="235.3"/><line x1="384.2" y1="-63.4" x2="-740.1" y2="239.3"/><line x1="388.8" y1="-62.8" x2="-737.5" y2="243.4"/><line x1="398.1" y1="-61.6" x2="-732.2" y2="251.9"/><line x1="402.8" y1="-60.9" x2="-729.6" y2="256.2"/><line x1="407.6" y1="-60.3" x2="-726.8" y2="260.6"/><line x1="412.4" y1="-59.6" x2="-724.0" y2="265.0"/><line x1="422.0" y1="-58.3" x2="-718.3" y2="274.2"/><line x1="426.9" y1="-57.7" x2="-715.3" y2="278.9"/><line x1="431.8" y1="-57.0" x2="-712.4" y2="283.7"/><line x1="436.7" y1="-56.4" x2="-709.3" y2="288.6"/><line x1="446.7" y1="-55.0" x2="-703.0" y2="298.6"/><line x1="451.7" y1="-54.3" x2="-699.8" y2="303.7"/><line x1="456.8" y1="-53.7" x2="-696.6" y2="309.0"/><line x1="461.9" y1="-53.0" x2="-693.2" y2="314.3"/><line x1="472.2" y1="-51.6" x2="-686.3" y2="325.3"/><line x1="477.4" y1="-50.9" x2="-682.8" y2="331.0"/><line x1="482.7" y1="-50.2" x2="-679.2" y2="336.7"/><line x1="487.9" y1="-49.5" x2="-675.5" y2="342.6"/><line x1="498.6" y1="-48.0" x2="-667.9" y2="354.7"/><line x1="504.0" y1="-47.3" x2="-664.0" y2="361.0"/><line x1="509.4" y1="-46.6" x2="-660.1" y2="367.3"/><line x1="514.9" y1="-45.8" x2="-656.0" y2="373.9"/><line x1="525.9" y1="-44.3" x2="-647.6" y2="387.3"/><line x1="531.5" y1="-43.6" x2="-643.3" y2="394.2"/><line x1="537.1" y1="-42.8" x2="-638.8" y2="401.3"/><line x1="542.8" y1="-42.1" x2="-634.3" y2="408.5"/><line x1="554.2" y1="-40.5" x2="-624.9" y2="423.5"/><line x1="560.0" y1="-39.7" x2="-620.1" y2="431.2"/><line x1="565.9" y1="-39.0" x2="-615.2" y2="439.2"/><line x1="571.7" y1="-38.2" x2="-610.1" y2="447.3"/><line x1="583.6" y1="-36.6" x2="-599.6" y2="464.1"/><line x1="589.6" y1="-35.8" x2="-594.2" y2="472.7"/><line x1="595.6" y1="-34.9" x2="-588.6" y2="481.7"/><line x1="601.7" y1="-34.1" x2="-582.9" y2="490.8"/><line x1="614.0" y1="-32.5" x2="-571.1" y2="509.7"/><line x1="620.3" y1="-31.6" x2="-564.9" y2="519.6"/><line x1="626.5" y1="-30.8" x2="-558.6" y2="529.7"/><line x1="632.9" y1="-29.9" x2="-552.1" y2="540.0"/><line x1="645.6" y1="-28.2" x2="-538.6" y2="561.6"/><line x1="652.1" y1="-27.3" x2="-531.6" y2="572.8"/><line x1="658.6" y1="-26.4" x2="-524.4" y2="584.4"/><line x1="665.2" y1="-25.6" x2="-517.0" y2="596.2"/><line x1="678.5" y1="-23.8" x2="-501.5" y2="621.0"/><line x1="685.2" y1="-22.9" x2="-493.4" y2="633.9"/><line x1="691.9" y1="-22.0" x2="-485.1" y2="647.2"/><line x1="698.8" y1="-21.0" x2="-476.5" y2="660.9"/><line x1="712.6" y1="-19.2" x2="-458.6" y2="689.6"/><line x1="719.6" y1="-18.2" x2="-449.2" y2="704.7"/><line x1="726.6" y1="-17.3" x2="-439.5" y2="720.2"/><line x1="733.7" y1="-16.3" x2="-429.4" y2="736.3"/><line x1="748.1" y1="-14.4" x2="-408.4" y2="770.0"/><line x1="755.3" y1="-13.4" x2="-397.3" y2="787.7"/><line x1="762.7" y1="-12.4" x2="-385.8" y2="806.1"/><line x1="770.1" y1="-11.4" x2="-373.9" y2="825.1"/><line x1="785.0" y1="-9.4" x2="-348.8" y2="865.2"/><line x1="792.6" y1="-8.4" x2="-335.6" y2="886.4"/><line x1="800.2" y1="-7.4" x2="-321.8" y2="908.4"/><line x1="807.9" y1="-6.3" x2="-307.5" y2="931.3"/><line x1="823.5" y1="-4.2" x2="-277.1" y2="979.9"/><line x1="831.4" y1="-3.1" x2="-261.0" y2="1005.7"/><line x1="839.4" y1="-2.1" x2="-244.2" y2="1032.6"/><line x1="847.4" y1="-1.0" x2="-226.6" y2="1060.7"/><line x1="863.7" y1="1.2" x2="-189.1" y2="1120.7"/><line x1="871.9" y1="2.3" x2="-169.0" y2="1152.9"/><line x1="880.2" y1="3.4" x2="-148.0" y2="1186.5"/><line x1="888.6" y1="4.6" x2="-126.0" y2="1221.8"/><line x1="905.6" y1="6.8" x2="-78.4" y2="1297.8"/><line x1="914.2" y1="8.0" x2="-52.8" y2="1338.8"/><line x1="922.9" y1="9.2" x2="-25.8" y2="1382.0"/><line x1="931.6" y1="10.4" x2="2.7" y2="1427.6"/><line x1="949.4" y1="12.8" x2="64.8" y2="1527.0"/><line x1="958.4" y1="14.0" x2="98.7" y2="1581.2"/><line x1="967.4" y1="15.2" x2="134.7" y2="1638.8"/><line x1="976.6" y1="16.4" x2="173.1" y2="1700.1"/><line x1="995.2" y1="18.9" x2="257.7" y2="1835.5"/><line x1="1004.6" y1="20.2" x2="304.6" y2="1910.5"/><line x1="1014.1" y1="21.5" x2="354.9" y2="1991.0"/><line x1="1023.7" y1="22.8" x2="409.1" y2="2077.8"/><line x1="1043.1" y1="25.4" x2="531.2" y2="2273.0"/><line x1="1053.0" y1="26.7" x2="600.2" y2="2383.5"/><line x1="1062.9" y1="28.1" x2="675.5" y2="2504.0"/><line x1="1073.0" y1="29.4" x2="758.1" y2="2636.0"/><line x1="1093.3" y1="32.2" x2="949.3" y2="2941.9"/><line x1="1103.7" y1="33.6" x2="1061.0" y2="3120.5"/><line x1="1114.1" y1="35.0" x2="1185.8" y2="3320.3"/><line x1="1124.7" y1="36.4" x2="1326.4" y2="3545.1"/><line x1="265.8" y1="-79.4" x2="1135.3" y2="37.8"/><line x1="262.5" y1="-78.7" x2="1135.5" y2="39.8"/><line x1="259.1" y1="-78.0" x2="1135.7" y2="41.8"/><line x1="255.6" y1="-77.2" x2="1135.9" y2="43.8"/><line x1="248.7" y1="-75.8" x2="1136.2" y2="48.0"/><line x1="245.2" y1="-75.0" x2="1136.4" y2="50.1"/><line x1="241.6" y1="-74.3" x2="1136.6" y2="52.2"/><line x1="238.1" y1="-73.5" x2="1136.8" y2="54.4"/><line x1="230.9" y1="-72.0" x2="1137.3" y2="58.8"/><line x1="227.2" y1="-71.2" x2="1137.5" y2="61.1"/><line x1="223.5" y1="-70.4" x2="1137.7" y2="63.4"/><line x1="219.8" y1="-69.6" x2="1137.9" y2="65.7"/><line x1="212.3" y1="-68.0" x2="1138.3" y2="70.5"/><line x1="208.4" y1="-67.2" x2="1138.6" y2="72.9"/><line x1="204.6" y1="-66.4" x2="1138.8" y2="75.4"/><line x1="200.7" y1="-65.6" x2="1139.0" y2="77.9"/><line x1="192.9" y1="-63.9" x2="1139.5" y2="83.0"/><line x1="188.9" y1="-63.1" x2="1139.8" y2="85.7"/><line x1="184.9" y1="-62.2" x2="1140.0" y2="88.3"/><line x1="180.8" y1="-61.3" x2="1140.3" y2="91.0"/><line x1="172.6" y1="-59.6" x2="1140.8" y2="96.6"/><line x1="168.4" y1="-58.7" x2="1141.0" y2="99.4"/><line x1="164.2" y1="-57.8" x2="1141.3" y2="102.3"/><line x1="160.0" y1="-56.9" x2="1141.6" y2="105.2"/><line x1="151.4" y1="-55.1" x2="1142.1" y2="111.2"/><line x1="147.1" y1="-54.2" x2="1142.4" y2="114.3"/><line x1="142.7" y1="-53.2" x2="1142.7" y2="117.4"/><line x1="138.3" y1="-52.3" x2="1143.0" y2="120.6"/><line x1="129.3" y1="-50.4" x2="1143.6" y2="127.2"/><line x1="124.7" y1="-49.4" x2="1143.9" y2="130.5"/><line x1="120.1" y1="-48.4" x2="1144.3" y2="133.9"/><line x1="115.5" y1="-47.5" x2="1144.6" y2="137.4"/><line x1="106.1" y1="-45.5" x2="1145.2" y2="144.5"/><line x1="101.3" y1="-44.4" x2="1145.6" y2="148.2"/><line x1="96.5" y1="-43.4" x2="1145.9" y2="151.9"/><line x1="91.6" y1="-42.4" x2="1146.3" y2="155.7"/><line x1="81.7" y1="-40.3" x2="1147.0" y2="163.5"/><line x1="76.7" y1="-39.2" x2="1147.4" y2="167.5"/><line x1="71.7" y1="-38.1" x2="1147.8" y2="171.6"/><line x1="66.5" y1="-37.1" x2="1148.2" y2="175.8"/><line x1="56.2" y1="-34.9" x2="1149.0" y2="184.4"/><line x1="50.9" y1="-33.7" x2="1149.4" y2="188.8"/><line x1="45.6" y1="-32.6" x2="1149.8" y2="193.3"/><line x1="40.2" y1="-31.5" x2="1150.2" y2="197.9"/><line x1="29.3" y1="-29.1" x2="1151.1" y2="207.5"/><line x1="23.8" y1="-28.0" x2="1151.6" y2="212.4"/><line x1="18.2" y1="-26.8" x2="1152.0" y2="217.4"/><line x1="12.5" y1="-25.6" x2="1152.5" y2="222.5"/><line x1="1.1" y1="-23.1" x2="1153.5" y2="233.0"/><line x1="-4.8" y1="-21.9" x2="1154.0" y2="238.5"/><line x1="-10.7" y1="-20.7" x2="1154.5" y2="244.1"/><line x1="-16.6" y1="-19.4" x2="1155.0" y2="249.8"/><line x1="-28.7" y1="-16.8" x2="1156.1" y2="261.6"/><line x1="-34.9" y1="-15.5" x2="1156.7" y2="267.7"/><line x1="-41.1" y1="-14.2" x2="1157.3" y2="274.0"/><line x1="-47.4" y1="-12.9" x2="1157.9" y2="280.4"/><line x1="-60.1" y1="-10.1" x2="1159.1" y2="293.7"/><line x1="-66.6" y1="-8.8" x2="1159.8" y2="300.6"/><line x1="-73.2" y1="-7.4" x2="1160.4" y2="307.7"/><line x1="-79.9" y1="-5.9" x2="1161.1" y2="314.9"/><line x1="-93.4" y1="-3.1" x2="1162.5" y2="330.0"/><line x1="-100.2" y1="-1.6" x2="1163.2" y2="337.8"/><line x1="-107.2" y1="-0.1" x2="1164.0" y2="345.9"/><line x1="-114.2" y1="1.4" x2="1164.8" y2="354.2"/><line x1="-128.5" y1="4.4" x2="1166.4" y2="371.4"/><line x1="-135.8" y1="5.9" x2="1167.2" y2="380.4"/><line x1="-143.2" y1="7.5" x2="1168.1" y2="389.7"/><line x1="-150.6" y1="9.1" x2="1169.0" y2="399.2"/><line x1="-165.8" y1="12.3" x2="1170.8" y2="419.1"/><line x1="-173.5" y1="14.0" x2="1171.8" y2="429.5"/><line x1="-181.4" y1="15.6" x2="1172.8" y2="440.3"/><line x1="-189.3" y1="17.3" x2="1173.8" y2="451.3"/><line x1="-205.4" y1="20.7" x2="1176.0" y2="474.6"/><line x1="-213.6" y1="22.5" x2="1177.1" y2="486.8"/><line x1="-221.9" y1="24.2" x2="1178.3" y2="499.4"/><line x1="-230.4" y1="26.0" x2="1179.5" y2="512.5"/><line x1="-247.6" y1="29.7" x2="1182.1" y2="540.0"/><line x1="-256.3" y1="31.5" x2="1183.4" y2="554.5"/><line x1="-265.2" y1="33.4" x2="1184.8" y2="569.6"/><line x1="-274.2" y1="35.3" x2="1186.3" y2="585.2"/><line x1="-292.5" y1="39.2" x2="1189.4" y2="618.3"/><line x1="-301.8" y1="41.2" x2="1191.0" y2="635.8"/><line x1="-311.3" y1="43.2" x2="1192.7" y2="654.0"/><line x1="-320.9" y1="45.3" x2="1194.5" y2="673.0"/><line x1="-340.5" y1="49.4" x2="1198.2" y2="713.5"/><line x1="-350.5" y1="51.6" x2="1200.2" y2="735.1"/><line x1="-360.7" y1="53.7" x2="1202.4" y2="757.7"/><line x1="-370.9" y1="55.9" x2="1204.6" y2="781.3"/><line x1="-391.9" y1="60.4" x2="1209.3" y2="832.0"/><line x1="-402.7" y1="62.7" x2="1211.8" y2="859.2"/><line x1="-413.5" y1="65.0" x2="1214.5" y2="887.8"/><line x1="-424.6" y1="67.3" x2="1217.3" y2="918.0"/><line x1="-447.2" y1="72.1" x2="1223.4" y2="983.3"/><line x1="-458.7" y1="74.6" x2="1226.7" y2="1018.8"/><line x1="-470.4" y1="77.0" x2="1230.2" y2="1056.3"/><line x1="-482.3" y1="79.6" x2="1233.9" y2="1096.1"/><line x1="-506.6" y1="84.7" x2="1242.0" y2="1183.4"/><line x1="-519.0" y1="87.4" x2="1246.5" y2="1231.5"/><line x1="-531.7" y1="90.1" x2="1251.3" y2="1282.8"/><line x1="-544.5" y1="92.8" x2="1256.4" y2="1337.8"/><line x1="-570.8" y1="98.4" x2="1267.8" y2="1460.5"/><line x1="-584.2" y1="101.2" x2="1274.2" y2="1529.2"/><line x1="-597.9" y1="104.1" x2="1281.1" y2="1603.6"/><line x1="-611.8" y1="107.1" x2="1288.7" y2="1684.5"/><line x1="-640.2" y1="113.1" x2="1305.9" y2="1869.3"/><line x1="-654.8" y1="116.2" x2="1315.8" y2="1975.6"/><line x1="-669.7" y1="119.4" x2="1326.7" y2="2093.1"/><line x1="-684.8" y1="122.6" x2="1338.9" y2="2223.5"/><line x1="-715.7" y1="129.2" x2="1367.8" y2="2533.4"/><line x1="-731.6" y1="132.6" x2="1385.1" y2="2719.3"/><line x1="-747.8" y1="136.0" x2="1404.9" y2="2931.6"/><line x1="-764.2" y1="139.5" x2="1427.7" y2="3176.7"/></g><g stroke="#191c1f" stroke-width="1"><line x1="265.8" y1="-79.4" x2="-798.0" y2="146.7"/><line x1="285.5" y1="-76.8" x2="-789.3" y2="160.6"/><line x1="305.8" y1="-74.0" x2="-780.0" y2="175.5"/><line x1="326.7" y1="-71.2" x2="-770.0" y2="191.5"/><line x1="348.2" y1="-68.3" x2="-759.2" y2="208.8"/><line x1="370.5" y1="-65.3" x2="-747.5" y2="227.4"/><line x1="393.5" y1="-62.2" x2="-734.9" y2="247.6"/><line x1="417.2" y1="-59.0" x2="-721.2" y2="269.6"/><line x1="441.7" y1="-55.7" x2="-706.2" y2="293.5"/><line x1="467.0" y1="-52.3" x2="-689.8" y2="319.7"/><line x1="493.2" y1="-48.7" x2="-671.8" y2="348.6"/><line x1="520.4" y1="-45.1" x2="-651.8" y2="380.5"/><line x1="548.5" y1="-41.3" x2="-629.7" y2="415.9"/><line x1="577.6" y1="-37.4" x2="-604.9" y2="455.6"/><line x1="607.9" y1="-33.3" x2="-577.1" y2="500.1"/><line x1="639.2" y1="-29.1" x2="-545.5" y2="550.7"/><line x1="671.8" y1="-24.7" x2="-509.4" y2="608.4"/><line x1="705.6" y1="-20.1" x2="-467.7" y2="675.1"/><line x1="740.9" y1="-15.4" x2="-419.1" y2="752.8"/><line x1="777.5" y1="-10.4" x2="-361.6" y2="844.8"/><line x1="815.7" y1="-5.3" x2="-292.6" y2="955.1"/><line x1="855.5" y1="0.1" x2="-208.3" y2="1090.1"/><line x1="897.1" y1="5.7" x2="-102.8" y2="1258.8"/><line x1="940.5" y1="11.6" x2="32.9" y2="1475.9"/><line x1="985.8" y1="17.7" x2="214.0" y2="1765.5"/><line x1="1033.3" y1="24.1" x2="467.7" y2="2171.5"/><line x1="1083.1" y1="30.8" x2="848.9" y2="2781.3"/><line x1="252.2" y1="-76.5" x2="1136.1" y2="45.9"/><line x1="234.5" y1="-72.7" x2="1137.0" y2="56.6"/><line x1="216.0" y1="-68.8" x2="1138.1" y2="68.1"/><line x1="196.8" y1="-64.7" x2="1139.3" y2="80.4"/><line x1="176.7" y1="-60.5" x2="1140.5" y2="93.8"/><line x1="155.7" y1="-56.0" x2="1141.9" y2="108.2"/><line x1="133.8" y1="-51.3" x2="1143.3" y2="123.9"/><line x1="110.8" y1="-46.5" x2="1144.9" y2="140.9"/><line x1="86.7" y1="-41.3" x2="1146.6" y2="159.6"/><line x1="61.4" y1="-36.0" x2="1148.5" y2="180.1"/><line x1="34.8" y1="-30.3" x2="1150.7" y2="202.6"/><line x1="6.8" y1="-24.4" x2="1153.0" y2="227.7"/><line x1="-22.6" y1="-18.1" x2="1155.6" y2="255.6"/><line x1="-53.7" y1="-11.5" x2="1158.5" y2="287.0"/><line x1="-86.6" y1="-4.5" x2="1161.8" y2="322.4"/><line x1="-121.3" y1="2.9" x2="1165.6" y2="362.7"/><line x1="-158.2" y1="10.7" x2="1169.9" y2="409.0"/><line x1="-197.3" y1="19.0" x2="1174.9" y2="462.8"/><line x1="-238.9" y1="27.9" x2="1180.8" y2="526.0"/><line x1="-283.3" y1="37.3" x2="1187.8" y2="601.4"/><line x1="-330.6" y1="47.3" x2="1196.3" y2="692.8"/><line x1="-381.4" y1="58.1" x2="1206.9" y2="806.0"/><line x1="-435.8" y1="69.7" x2="1220.2" y2="949.8"/><line x1="-494.3" y1="82.1" x2="1237.8" y2="1138.4"/><line x1="-557.5" y1="95.6" x2="1261.9" y2="1396.9"/><line x1="-625.9" y1="110.1" x2="1296.9" y2="1772.7"/><line x1="-700.1" y1="125.9" x2="1352.5" y2="2369.4"/><line x1="-781.0" y1="143.0" x2="1454.3" y2="3462.4"/></g><rect x="0" y="0" width="700" height="654" fill="url(#fade)"/></svg>
<div style="left:395.61px;width:6.78px;top:396.00px;height:10px;line-height:10px;font-size:5px;color:#6a6a6a;white-space:nowrap;text-align:center;transform:rotate(200deg)">0</div>
<div style="left:403.61px;width:6.78px;top:398.00px;height:10px;line-height:10px;font-size:5px;color:#6a6a6a;white-space:nowrap;text-align:center;transform:rotate(140deg)">0</div>
<div style="left:458.06px;width:8.89px;top:423.00px;height:10px;line-height:10px;font-size:5.5px;color:#6a6a6a;white-space:nowrap;text-align:center;transform:rotate(200deg)">-5</div>
<div style="left:524.66px;width:12.67px;top:449.50px;height:11px;line-height:11px;font-size:6px;color:#7a7a7a;white-space:nowrap;text-align:center;transform:rotate(200deg)">-10</div>
<div style="left:608.66px;width:12.67px;top:481.50px;height:11px;line-height:11px;font-size:6px;color:#7a7a7a;white-space:nowrap;text-align:center;transform:rotate(200deg)">-15</div>
<div style="left:698.66px;width:12.67px;top:515.50px;height:11px;line-height:11px;font-size:6px;color:#7a7a7a;white-space:nowrap;text-align:center;transform:rotate(200deg)">-20</div>
<div style="left:332.61px;width:6.78px;top:375.00px;height:10px;line-height:10px;font-size:5px;color:#484848;white-space:nowrap;text-align:center;transform:rotate(200deg)">5</div>
<div style="left:272.22px;width:9.56px;top:352.00px;height:10px;line-height:10px;font-size:5px;color:#444;white-space:nowrap;text-align:center;transform:rotate(200deg)">10</div>
<div style="left:219.22px;width:9.56px;top:332.00px;height:10px;line-height:10px;font-size:5px;color:#404040;white-space:nowrap;text-align:center;transform:rotate(200deg)">15</div>
<div style="left:174.22px;width:9.56px;top:313.50px;height:10px;line-height:10px;font-size:5px;color:#3c3c3c;white-space:nowrap;text-align:center;transform:rotate(200deg)">20</div>
<div style="left:130.72px;width:9.56px;top:296.70px;height:10px;line-height:10px;font-size:5px;color:#3a3a3a;white-space:nowrap;text-align:center;transform:rotate(200deg)">25</div>
<div style="left:88.22px;width:9.56px;top:280.70px;height:10px;line-height:10px;font-size:5px;color:#383838;white-space:nowrap;text-align:center;transform:rotate(200deg)">30</div>
<div style="left:49.72px;width:9.56px;top:266.00px;height:10px;line-height:10px;font-size:5px;color:#363636;white-space:nowrap;text-align:center;transform:rotate(200deg)">35</div>
<div style="left:355.47px;width:7.06px;top:433.00px;height:10px;line-height:10px;font-size:5.5px;color:#6a6a6a;white-space:nowrap;text-align:center;transform:rotate(140deg)">5</div>
<div style="left:299.66px;width:10.67px;top:471.50px;height:11px;line-height:11px;font-size:6px;color:#7a7a7a;white-space:nowrap;text-align:center;transform:rotate(140deg)">10</div>
<div style="left:237.66px;width:10.67px;top:518.50px;height:11px;line-height:11px;font-size:6px;color:#7a7a7a;white-space:nowrap;text-align:center;transform:rotate(140deg)">15</div>
<div style="left:166.55px;width:10.90px;top:572.50px;height:11px;line-height:11px;font-size:6.2px;color:#808080;white-space:nowrap;text-align:center;transform:rotate(140deg)">20</div>
<div style="left:80.39px;width:11.23px;top:636.00px;height:12px;line-height:12px;font-size:6.5px;color:#808080;white-space:nowrap;text-align:center;transform:rotate(140deg)">25</div>
<div style="left:444.78px;width:8.45px;top:365.80px;height:10px;line-height:10px;font-size:5px;color:#4a4a4a;white-space:nowrap;text-align:center;transform:rotate(140deg)">-5</div>
<div style="left:480.99px;width:11.23px;top:338.00px;height:10px;line-height:10px;font-size:5px;color:#444;white-space:nowrap;text-align:center;transform:rotate(140deg)">-10</div>
<div style="left:514.89px;width:11.23px;top:312.00px;height:10px;line-height:10px;font-size:5px;color:#404040;white-space:nowrap;text-align:center;transform:rotate(140deg)">-15</div>
<div style="left:543.99px;width:11.23px;top:289.50px;height:10px;line-height:10px;font-size:5px;color:#3c3c3c;white-space:nowrap;text-align:center;transform:rotate(140deg)">-20</div>
<div style="left:571.45px;width:10.50px;top:269.10px;height:9px;line-height:9px;font-size:4.5px;color:#3a3a3a;white-space:nowrap;text-align:center;transform:rotate(140deg)">-25</div>
<div style="left:595.75px;width:10.50px;top:250.50px;height:9px;line-height:9px;font-size:4.5px;color:#383838;white-space:nowrap;text-align:center;transform:rotate(140deg)">-30</div>
<div style="left:618.25px;width:10.50px;top:234.00px;height:9px;line-height:9px;font-size:4.5px;color:#363636;white-space:nowrap;text-align:center;transform:rotate(140deg)">-35</div>
<div style="left:640.55px;width:10.50px;top:217.50px;height:9px;line-height:9px;font-size:4.5px;color:#343434;white-space:nowrap;text-align:center;transform:rotate(140deg)">-40</div>
<div style="left:659.25px;width:10.50px;top:203.50px;height:9px;line-height:9px;font-size:4.5px;color:#323232;white-space:nowrap;text-align:center;transform:rotate(140deg)">-45</div>
<div style="left:324.2px;top:417.2px;width:1.7px;height:1.7px;background:#e8e8e8"></div>
<div style="left:427.2px;top:403.2px;width:1.7px;height:1.7px;background:#e8e8e8"></div>
<div style="left:400.8px;top:457.2px;width:1.7px;height:1.7px;background:#e8e8e8"></div>
<div style="left:49.00px;top:117.30px;height:14px;line-height:14px;font-size:8px;color:#f0f0f0;white-space:nowrap;font-weight:bold;transform:scaleX(1.028);transform-origin:0 50%;">View</div>
<svg style="left:30.5px;top:119px;" width="11" height="10" viewBox="0 0 11 10"><circle cx="4" cy="4" r="2.5" fill="#999"/><circle cx="7.5" cy="5" r="2.2" fill="#888"/><path d="M1 7 H10 M5 1 V9" stroke="#aaa" stroke-width="0.8"/></svg>
<div style="left:657px;top:115.6px;width:27px;height:9.600000000000009px;border:1px solid #8a8a8a;border-radius:5px;background:rgba(20,20,20,0.6)"></div>
<div style="left:661.00px;top:115.40px;height:10px;line-height:10px;font-size:5.6px;color:#c8c8c8;white-space:nowrap;">Persp ▾</div>
<div style="left:688px;top:115.6px;width:33.60000000000002px;height:9.600000000000009px;border:1px solid #8a8a8a;border-radius:5px;background:rgba(20,20,20,0.6)"></div>
<div style="left:692.00px;top:115.40px;height:10px;line-height:10px;font-size:5.6px;color:#c8c8c8;white-space:nowrap;">No cam ▾</div>
<svg style="left:26px;top:745px;" width="12" height="14" viewBox="0 0 12 14"><path d="M6 8 L9 3" stroke="#d0d040" stroke-width="1"/><path d="M6 8 L2 6" stroke="#4070e0" stroke-width="1"/><path d="M6 8 L4 12" stroke="#e04040" stroke-width="1"/><text x="9" y="4" font-size="4" fill="#d0d040">y</text></svg>
<div style="left:724px;top:112px;width:15px;height:654px;background:#3a3a3a"></div>
<div style="left:724px;top:112px;width:15px;height:5px;background:#2c2c2c"></div>
<div style="left:734px;top:113px;width:3px;height:3px;background:#111"></div>
<div style="left:725px;top:119.0px;width:13px;height:13px;background:linear-gradient(#6a7fa6,#55698e)"></div>
<svg style="left:726px;top:120.0px;" width="11" height="11" viewBox="0 0 11 11"><ellipse cx="5.5" cy="5.5" rx="4.5" ry="3" fill="#ddd"/><circle cx="5.5" cy="5.5" r="1.6" fill="#333"/></svg>
<svg style="left:726px;top:134.1px;" width="11" height="11" viewBox="0 0 11 11"><rect x="1" y="1" width="7" height="7" fill="none" stroke="#ddd" stroke-width="1"/><path d="M3 6 L6 3 L9 8Z" fill="#e8d040"/><path d="M9 9 L11 10 L9 11Z" fill="#aaa"/></svg>
<svg style="left:726px;top:149.4px;" width="11" height="11" viewBox="0 0 11 11"><rect x="1.5" y="5" width="8" height="5.5" fill="#e0e0e0"/><path d="M3 5 V3 A2.5 2.5 0 0 1 8 3 V5" stroke="#ddd" fill="none" stroke-width="1.2"/></svg>
<svg style="left:726px;top:163.4px;" width="11" height="11" viewBox="0 0 11 11"><circle cx="5.5" cy="4.5" r="3.5" fill="none" stroke="#ddd" stroke-width="1"/><path d="M3.5 3 L7.5 6 M7.5 3 L3.5 6" stroke="#ddd" stroke-width="0.8"/><rect x="4" y="8.5" width="3" height="2" fill="#ccc"/></svg>
<svg style="left:726px;top:177.4px;" width="11" height="11" viewBox="0 0 11 11"><circle cx="5.5" cy="5.5" r="4.5" fill="#cfcfcf"/><path d="M2 5 Q5.5 2 9 5" stroke="#888" fill="none"/></svg>
<div style="left:725px;top:190.4px;width:13px;height:13px;background:linear-gradient(#6a7fa6,#55698e)"></div>
<svg style="left:726px;top:191.4px;" width="11" height="11" viewBox="0 0 11 11"><circle cx="5.5" cy="4.5" r="3.5" fill="none" stroke="#e8d040" stroke-width="1.2"/><rect x="4" y="8.5" width="3" height="2" fill="#ccc"/></svg>
<svg style="left:726px;top:206.5px;" width="11" height="11" viewBox="0 0 11 11"><circle cx="5.5" cy="4" r="2.8" fill="none" stroke="#ddd" stroke-width="1.1"/><path d="M1 10.5 Q5.5 6 10 10.5" stroke="#ddd" stroke-width="1.2" fill="none"/></svg>
<div style="left:725px;top:220.9px;width:13px;height:13px;background:linear-gradient(#6a7fa6,#55698e)"></div>
<svg style="left:726px;top:221.9px;" width="11" height="11" viewBox="0 0 11 11"><circle cx="5.5" cy="5.5" r="4.5" fill="#222"/><path d="M2 4 Q5.5 0 9 4" stroke="#ddd" stroke-width="1.2" fill="none"/></svg>
<svg style="left:726px;top:235.9px;" width="11" height="11" viewBox="0 0 11 11"><path d="M1 4 L6 2 L10 6 L6 8Z" fill="none" stroke="#ddd"/><path d="M2 8 Q6 11 10 8" stroke="#ddd" fill="none"/></svg>
<svg style="left:726px;top:249.9px;" width="11" height="11" viewBox="0 0 11 11"><rect x="1" y="5" width="6" height="5" fill="#ddd"/><path d="M4 4 L8 1 L10 4" stroke="#ddd" fill="none"/></svg>
<svg style="left:726px;top:266.5px;" width="11" height="11" viewBox="0 0 11 11"><circle cx="5.5" cy="5.5" r="1.8" fill="#e0e0e0"/></svg>
<svg style="left:726px;top:281.5px;" width="11" height="11" viewBox="0 0 11 11"><path d="M2 9 L8 2" stroke="#ddd" stroke-width="1.5"/><circle cx="2" cy="9" r="1.2" fill="#ddd"/></svg>
<svg style="left:726px;top:295.8px;" width="11" height="11" viewBox="0 0 11 11"><path d="M2 9 L8 2" stroke="#ddd" stroke-width="1.5"/><circle cx="2" cy="9" r="1.2" fill="#ddd"/></svg>
<svg style="left:726px;top:310.5px;" width="11" height="11" viewBox="0 0 11 11"><text x="5" y="5.5" font-size="5" fill="#eee" font-weight="bold" font-family="Liberation Sans">12</text><circle cx="2.5" cy="8" r="1.2" fill="#eee"/></svg>
<svg style="left:726px;top:326.5px;" width="11" height="11" viewBox="0 0 11 11"><path d="M1 10 L5.5 2 L10 10Z" fill="#ddd"/><path d="M1 10 L10 10" stroke="#aaa"/></svg>
<svg style="left:726px;top:339.7px;" width="11" height="11" viewBox="0 0 11 11"><text x="5" y="5.5" font-size="5" fill="#eee" font-weight="bold" font-family="Liberation Sans">12</text><circle cx="2.5" cy="8" r="1.2" fill="#eee"/></svg>
<svg style="left:726px;top:354.5px;" width="11" height="11" viewBox="0 0 11 11"><path d="M1.5 10 V2 H10" stroke="#ddd" fill="none"/><path d="M1.5 10 Q2 3 10 2" stroke="#999" fill="none"/></svg>
<div style="left:725px;top:368.0px;width:13px;height:13px;background:linear-gradient(#6a7fa6,#55698e)"></div>
<svg style="left:726px;top:369.0px;" width="11" height="11" viewBox="0 0 11 11"><path d="M1 9 L5.5 2 L10 9Z" fill="#9cb0d8"/></svg>
<div style="left:725px;top:382.7px;width:13px;height:13px;background:linear-gradient(#6a7fa6,#55698e)"></div>
<svg style="left:726px;top:383.7px;" width="11" height="11" viewBox="0 0 11 11"><rect x="1" y="1" width="9" height="9" fill="#d8a0a0"/><path d="M1 1 L10 10 M5 1 L10 6 M1 5 L6 10" stroke="#eee"/></svg>
<svg style="left:726px;top:398.3px;" width="11" height="11" viewBox="0 0 11 11"><path d="M5.5 1 L10 5.5 L5.5 10 L1 5.5Z" fill="#8aa8d8"/><path d="M1 5.5 H10" stroke="#ddd"/></svg>
<svg style="left:726px;top:411.5px;" width="11" height="11" viewBox="0 0 11 11"><rect x="1.5" y="2" width="8" height="7" fill="#8ab040"/><rect x="3" y="3.5" width="5" height="4" fill="#ddd"/></svg>
<svg style="left:726px;top:427.5px;" width="11" height="11" viewBox="0 0 11 11"><path d="M1 5.5 H6 L10 2 M6 5.5 L10 9" stroke="#ddd" stroke-width="1.1" fill="none"/></svg>
<svg style="left:726px;top:441.7px;" width="11" height="11" viewBox="0 0 11 11"><circle cx="5.5" cy="5.5" r="4.5" fill="none" stroke="#ddd"/><rect x="3" y="4" width="5" height="3" fill="#ddd"/></svg>
<div style="left:725px;top:455.9px;width:13px;height:13px;background:linear-gradient(#6a7fa6,#55698e)"></div>
<svg style="left:726px;top:456.9px;" width="11" height="11" viewBox="0 0 11 11"><rect x="1" y="1" width="9" height="9" fill="#ddd"/><path d="M2 8 L5 4 L9 8Z" fill="#555"/></svg>
<div style="left:725px;top:477.2px;width:13px;height:13px;background:linear-gradient(#6a7fa6,#55698e)"></div>
<svg style="left:726px;top:478.2px;" width="11" height="11" viewBox="0 0 11 11"><circle cx="5.5" cy="4.5" r="3.5" fill="#ddd"/><path d="M5.5 8 V11" stroke="#ddd"/></svg>
<svg style="left:726px;top:724.5px;" width="11" height="11" viewBox="0 0 11 11"><circle cx="5.5" cy="5.5" r="4.8" fill="none" stroke="#ddd" stroke-width="0.8"/><path d="M5.5 4.5 V8.5" stroke="#ddd" stroke-width="1.2"/><circle cx="5.5" cy="2.8" r="0.7" fill="#ddd"/></svg>
<div style="left:725px;top:738.5px;width:13px;height:13px;background:linear-gradient(#6a7fa6,#55698e)"></div>
<svg style="left:726px;top:739.5px;" width="11" height="11" viewBox="0 0 11 11"><rect x="1" y="1" width="9" height="9" fill="#e8c830" stroke="#333"/><path d="M5.5 1 V10 M1 5.5 H10" stroke="#fff" stroke-width="1.2"/></svg>
<svg style="left:726px;top:753.5px;" width="11" height="11" viewBox="0 0 11 11"><rect x="0" y="0" width="11" height="10" fill="#eee"/><ellipse cx="5.5" cy="5" rx="4" ry="2.5" fill="none" stroke="#111"/><circle cx="5.5" cy="5" r="1.5" fill="#111"/></svg>
<div style="left:739px;top:62.3px;width:4px;height:704px;background:#171717"></div>
<div style="left:740px;top:62.3px;width:3px;height:704px;background:#3a3a3a"></div>
<div style="left:743px;top:62.3px;width:342px;height:10.6px;background:#2b2b2b"></div>
<div style="left:743px;top:62.3px;width:60.700000000000045px;height:10.600000000000009px;background:#3c3c3c"></div>
<div style="left:803.7px;top:62.3px;width:1px;height:10.600000000000009px;background:#1c1c1c"></div>
<div style="left:746.70px;top:62.80px;height:10px;line-height:10px;font-size:5.6px;color:#c0c0c0;white-space:nowrap;">/obj/GEO_lemon</div>
<svg style="left:797.3px;top:65.6px;" width="4" height="4" viewBox="0 0 4 4"><path d="M0.5 0.5 L3.5 3.5 M3.5 0.5 L0.5 3.5" stroke="#d0d0d0" stroke-width="1.1"/></svg>
<div style="left:804.6px;top:62.3px;width:32.69999999999993px;height:10.600000000000009px;background:#2f2f2f"></div>
<div style="left:837.3px;top:62.3px;width:1px;height:10.600000000000009px;background:#1c1c1c"></div>
<div style="left:808.70px;top:62.80px;height:10px;line-height:10px;font-size:5.6px;color:#b4b4b4;white-space:nowrap;transform:scaleX(1.166);transform-origin:0 50%;">/mat</div>
<svg style="left:830.9px;top:65.6px;" width="4" height="4" viewBox="0 0 4 4"><path d="M0.5 0.5 L3.5 3.5 M3.5 0.5 L0.5 3.5" stroke="#d0d0d0" stroke-width="1.1"/></svg>
<div style="left:838.3px;top:62.3px;width:31.700000000000045px;height:10.600000000000009px;background:#2f2f2f"></div>
<div style="left:870px;top:62.3px;width:1px;height:10.600000000000009px;background:#1c1c1c"></div>
<div style="left:842.70px;top:62.80px;height:10px;line-height:10px;font-size:5.6px;color:#b4b4b4;white-space:nowrap;transform:scaleX(1.231);transform-origin:0 50%;">/out</div>
<svg style="left:864px;top:65.6px;" width="4" height="4" viewBox="0 0 4 4"><path d="M0.5 0.5 L3.5 3.5 M3.5 0.5 L0.5 3.5" stroke="#d0d0d0" stroke-width="1.1"/></svg>
<div style="left:871px;top:62.3px;width:37px;height:10.600000000000009px;background:#2f2f2f"></div>
<div style="left:908px;top:62.3px;width:1px;height:10.600000000000009px;background:#1c1c1c"></div>
<div style="left:875.40px;top:62.80px;height:10px;line-height:10px;font-size:5.6px;color:#b4b4b4;white-space:nowrap;font-weight:bold;transform:scaleX(1.038);transform-origin:0 50%;">/stage</div>
<svg style="left:901.7px;top:65.6px;" width="4" height="4" viewBox="0 0 4 4"><path d="M0.5 0.5 L3.5 3.5 M3.5 0.5 L0.5 3.5" stroke="#d0d0d0" stroke-width="1.1"/></svg>
<div style="left:909px;top:62.3px;width:61px;height:10.600000000000009px;background:#2f2f2f"></div>
<div style="left:970px;top:62.3px;width:1px;height:10.600000000000009px;background:#1c1c1c"></div>
<div style="left:912.60px;top:62.80px;height:10px;line-height:10px;font-size:5.6px;color:#b4b4b4;white-space:nowrap;transform:scaleX(1.056);transform-origin:0 50%;">Bookmark Editor</div>
<svg style="left:963.7px;top:65.6px;" width="4" height="4" viewBox="0 0 4 4"><path d="M0.5 0.5 L3.5 3.5 M3.5 0.5 L0.5 3.5" stroke="#d0d0d0" stroke-width="1.1"/></svg>
<svg style="left:974.75px;top:64.35px;" width="6.5" height="6.5" viewBox="0 0 6.5 6.5"><path d="M3.25 0.5 V6.0 M0.5 3.25 H6.0" stroke="#e0e0e0" stroke-width="1.6"/></svg>
<div style="left:1065px;top:65px;width:6px;height:5px;background:#e0e0e0"></div>
<svg style="left:1075.5px;top:65.1px;" width="5" height="5" viewBox="0 0 5 5"><path d="M0.5 1 H4.5 L2.5 4.5Z" fill="#e0e0e0"/></svg>
<div style="left:743px;top:72.9px;width:342px;height:20px;background:#3a3a3a"></div>
<svg style="left:747.4px;top:79px;" width="10" height="9" viewBox="0 0 10 9"><path d="M0 4 L4.5 0.5 V2.5 H9 V5.5 H4.5 V7.5Z" fill="#d8d8d8"/><path d="M7 7 L9 8 L7 9Z" fill="#ccc"/></svg>
<svg style="left:761.4px;top:79.5px;" width="9" height="8" viewBox="0 0 9 8"><path d="M9 4 L4.5 0.5 V2.5 H0 V5.5 H4.5 V7.5Z" fill="#6a6a6a"/></svg>
<div style="left:775.4px;top:76.4px;width:277.0000000000001px;height:13.199999999999989px;background:#333;border-top:1px solid #1a1a1a;border-left:1px solid #1a1a1a"></div>
<svg style="left:778.4px;top:78.4px;" width="10" height="10" viewBox="0 0 10 10"><rect x="0.5" y="3" width="9" height="6.5" fill="#777"/><path d="M0.5 3 L9.5 0.5" stroke="#ddd" stroke-width="1.6" stroke-dasharray="1.5 1"/><rect x="1.5" y="6" width="3" height="2" fill="#ccc"/><rect x="5.5" y="6" width="3" height="2" fill="#aaa"/></svg>
<div style="left:791.30px;top:77.50px;height:11px;line-height:11px;font-size:6.3px;color:#d0d0d0;white-space:nowrap;transform:scaleX(0.940);transform-origin:0 50%;">obj</div>
<svg style="left:801.4px;top:76.4px;" width="4" height="13.199999999999989" viewBox="0 0 4 13.199999999999989"><path d="M0.5 0 L3 6.6 L0.5 13.2" stroke="#222" fill="none" stroke-dasharray="1 1"/></svg>
<svg style="left:808.4px;top:77.9px;" width="12" height="11" viewBox="0 0 12 11"><path d="M1 1 L5 0 V7 L1 8Z" fill="#4a7ad0"/><circle cx="8.5" cy="6" r="3" fill="#e03020"/><path d="M2.5 10.5 L5.5 4 L8.5 10.5Z" fill="#f0d020"/></svg>
<div style="left:821.40px;top:77.50px;height:11px;line-height:11px;font-size:6.3px;color:#d8d8d8;white-space:nowrap;transform:scaleX(0.981);transform-origin:0 50%;">GEO_lemon</div>
<div style="left:1044px;top:76.4px;width:8.4px;height:13.2px;background:#2a2a2a"></div>
<svg style="left:1046.5px;top:81.0px;" width="4" height="4" viewBox="0 0 4 4"><path d="M0.5 1 H3.5 L2.0 3.5Z" fill="#888"/></svg>
<svg style="left:1056px;top:76.6px;" width="13" height="13" viewBox="0 0 13 13"><circle cx="6.5" cy="6.5" r="5.8" fill="none" stroke="#d0d0d0" stroke-width="0.8"/><text x="6.5" y="9" font-size="7" text-anchor="middle" fill="#ddd" font-family="Liberation Sans">1</text></svg>
<svg style="left:1070px;top:76.6px;" width="13" height="13" viewBox="0 0 13 13"><circle cx="6.5" cy="6.5" r="5.8" fill="none" stroke="#5a88d0" stroke-width="0.9"/><circle cx="6.5" cy="6.5" r="3.6" fill="none" stroke="#5a88d0" stroke-width="0.9"/><circle cx="6.5" cy="6.5" r="1.2" fill="#5a88d0"/></svg>
<div style="left:743px;top:92.7px;width:342px;height:15.2px;background:#333;border-top:1px solid #444"></div>
<div style="left:743.5px;top:93.5px;width:6px;height:14px;background:#404040"></div>
<svg style="left:744.5px;top:94.5px;" width="4" height="3" viewBox="0 0 4 3"><path d="M0 3 L2 0 L4 3Z" fill="#111"/></svg>
<div style="left:763.90px;top:94.80px;height:12px;line-height:12px;font-size:7px;color:#d0d0d0;white-space:nowrap;">Add</div>
<div style="left:785.70px;top:94.80px;height:12px;line-height:12px;font-size:7px;color:#d0d0d0;white-space:nowrap;transform:scaleX(0.978);transform-origin:0 50%;">Edit</div>
<div style="left:806.40px;top:94.80px;height:12px;line-height:12px;font-size:7px;color:#d0d0d0;white-space:nowrap;transform:scaleX(0.942);transform-origin:0 50%;">Go</div>
<div style="left:824.00px;top:94.80px;height:12px;line-height:12px;font-size:7px;color:#d0d0d0;white-space:nowrap;">View</div>
<div style="left:848.30px;top:94.80px;height:12px;line-height:12px;font-size:7px;color:#9a9a9a;white-space:nowrap;transform:scaleX(1.040);transform-origin:0 50%;">Tools</div>
<div style="left:873.60px;top:94.80px;height:12px;line-height:12px;font-size:7px;color:#d0d0d0;white-space:nowrap;transform:scaleX(1.056);transform-origin:0 50%;">Layout</div>
<div style="left:903.20px;top:94.80px;height:12px;line-height:12px;font-size:7px;color:#d0d0d0;white-space:nowrap;transform:scaleX(0.969);transform-origin:0 50%;">Labs</div>
<div style="left:925.50px;top:94.80px;height:12px;line-height:12px;font-size:7px;color:#d0d0d0;white-space:nowrap;">Help</div>
<svg style="left:947px;top:96px;" width="10" height="10" viewBox="0 0 10 10"><path d="M1 1 L9 9 M9 1 L1 9" stroke="#e0e0e0" stroke-width="1.6"/><circle cx="2" cy="2" r="1.5" fill="#e0e0e0"/></svg>
<svg style="left:962px;top:96px;" width="9" height="10" viewBox="0 0 9 10"><path d="M1 1 V9 H8 M3 3 H8 M3 6 H8" stroke="#ddd" stroke-width="1.2" fill="none"/></svg>
<div style="left:976px;top:96px;width:8.2px;height:9.6px;background:#e8e8e8;border:1px solid #333"></div>
<svg style="left:988.7px;top:96px;" width="8" height="9.6" viewBox="0 0 8 9.6"><rect x="0" y="0" width="8" height="9.6" fill="#eee"/><rect x="1" y="1" width="2" height="2" fill="#d33"/><rect x="4" y="1" width="2" height="2" fill="#3a3"/><rect x="1" y="4" width="2" height="2" fill="#33d"/><rect x="4" y="4" width="2" height="2" fill="#dd3"/><rect x="1" y="7" width="2" height="2" fill="#d3d"/><rect x="4" y="7" width="2" height="2" fill="#3dd"/></svg>
<svg style="left:1002.7px;top:96px;" width="9.6" height="9.6" viewBox="0 0 9.6 9.6"><rect x="0.5" y="0.5" width="8.6" height="8.6" fill="none" stroke="#ddd"/><path d="M4.8 0.5 V9 M0.5 3.5 H9 M0.5 6.5 H9" stroke="#ddd"/></svg>
<div style="left:1016.3px;top:96px;width:9.6px;height:9.6px;background:#eee"></div>
<div style="left:1018px;top:98.5px;width:6px;height:3px;background:#222"></div>
<div style="left:1030px;top:96px;width:10.2px;height:9.6px;background:#e8d040"></div>
<div style="left:1031.5px;top:98px;width:7px;height:1.5px;background:#333"></div>
<div style="left:1043.6px;top:96px;width:9.4px;height:9.6px;background:#5a9ad8;border:1px solid #ddd"></div>
<svg style="left:1048px;top:102px;" width="6" height="5" viewBox="0 0 6 5"><path d="M0 5 L3 0 L6 5Z" fill="#111"/></svg>
<div style="left:1057.9px;top:97.5px;width:9.5px;height:8px;background:#d89040;border-radius:2px"></div>
<div style="left:1057.9px;top:99.5px;width:9.5px;height:1.5px;background:#a86020"></div>
<div style="left:1070.80px;top:94.80px;height:12px;line-height:12px;font-size:7px;color:#ddd;white-space:nowrap;">(</div>
<svg style="left:1078px;top:98.5px;" width="4" height="5" viewBox="0 0 4 5"><path d="M0 0 L4 2.5 L0 5Z" fill="#999"/></svg>
<div style="left:743px;top:107.9px;width:341.2px;height:658px;background:#2f2f2f"></div>
<div style="left:1084.2px;top:62.3px;width:1px;height:704px;background:#1a1a1a"></div>
<div style="left:1085px;top:62.3px;width:3px;height:704px;background:#484848"></div>
<div style="left:1015.00px;top:114.40px;height:22px;line-height:22px;font-size:13px;color:#4b4b4b;white-space:nowrap;font-weight:bold;transform:scaleX(1.038);transform-origin:0 50%;">Geometry</div>
<div style="left:743.50px;top:105.10px;height:12px;line-height:12px;font-size:7px;color:#d8d8d8;white-space:nowrap;transform:scaleX(1.028);transform-origin:0 50%;">nerge1</div>
<div style="left:742.80px;top:115.80px;height:12px;line-height:12px;font-size:7px;color:#7aa0d8;white-space:nowrap;transform:scaleX(0.955);transform-origin:0 50%;">on_fbx/&quot;</div>
<div style="left:743.00px;top:130.60px;height:12px;line-height:12px;font-size:7px;color:#8a8a8a;white-space:nowrap;transform:scaleX(0.719);transform-origin:0 50%;">e</div>
<div style="left:743.00px;top:172.40px;height:12px;line-height:12px;font-size:7px;color:#d0d0d0;white-space:nowrap;transform:scaleX(0.926);transform-origin:0 50%;">m1</div>
<div style="left:743.00px;top:244.50px;height:12px;line-height:12px;font-size:7px;color:#d0d0d0;white-space:nowrap;transform:scaleX(0.835);transform-origin:0 50%;">on</div>
<div style="left:743.00px;top:331.00px;height:12px;line-height:12px;font-size:7px;color:#d0d0d0;white-space:nowrap;">on_packed</div>
<div style="left:743.00px;top:448.60px;height:12px;line-height:12px;font-size:7px;color:#d0d0d0;white-space:nowrap;transform:scaleX(1.025);transform-origin:0 50%;">ndomize1</div>
<div style="left:743.00px;top:482.30px;height:12px;line-height:12px;font-size:7px;color:#d0d0d0;white-space:nowrap;transform:scaleX(1.025);transform-origin:0 50%;">ndomize2</div>
<div style="left:743.00px;top:546.70px;height:12px;line-height:12px;font-size:7px;color:#d0d0d0;white-space:nowrap;transform:scaleX(1.061);transform-origin:0 50%;">gure1</div>
<div style="left:743.00px;top:596.50px;height:12px;line-height:12px;font-size:7px;color:#d0d0d0;white-space:nowrap;transform:scaleX(1.069);transform-origin:0 50%;">tsolver1</div>
<svg style="left:910px;top:394px;" width="80" height="66" viewBox="0 0 80 66">
<ellipse cx="25.5" cy="43.9" rx="16.8" ry="17.2" fill="#4a6ca8"/>
<ellipse cx="25.5" cy="43.9" rx="9.3" ry="11.6" fill="#9a82d2"/>
<rect x="8.1" y="4.5" width="33.9" height="10.3" rx="1.2" fill="#d2d2d2"/>
<path d="M12.4 5 V14.3 M17 5 V14.3 M33.1 5 V14.3 M37.8 5 V14.3" stroke="#9a9a9a" stroke-width="0.8"/>
<path d="M21 12 L23 9.5 H28 L30 12Z" fill="#777"/>
<circle cx="25.5" cy="17.9" r="1.6" fill="#c8c8c8"/>
<path d="M25.5 19.5 V27" stroke="#aaa" stroke-width="0.8" stroke-dasharray="1 1.2"/>
<rect x="7.8" y="38.5" width="35.4" height="11.7" fill="#d2d2d2" stroke="#d8b828" stroke-width="1.2"/>
<rect x="37.8" y="40" width="4.4" height="8.8" fill="#10a8ea"/>
<path d="M12.4 39.5 V49.3 M17 39.5 V49.3 M33.1 39.5 V49.3" stroke="#9a9a9a" stroke-width="0.8"/>
<path d="M20.5 44.3 L25.5 42 L30.5 44.3 L25.5 46.5Z" fill="#b8a850"/>
<circle cx="25.5" cy="35.4" r="1.3" fill="#ddd"/>
<circle cx="25.5" cy="52" r="1.3" fill="#ddd"/>
</svg>
<div style="left:955.80px;top:398.00px;height:12px;line-height:12px;font-size:7px;color:#cfcfcf;white-space:nowrap;transform:scaleX(1.041);transform-origin:0 50%;">grid1</div>
<div style="left:955.80px;top:432.70px;height:12px;line-height:12px;font-size:7px;color:#cfcfcf;white-space:nowrap;transform:scaleX(1.040);transform-origin:0 50%;">scatter1</div>
<svg style="left:916px;top:546.5px;" width="9" height="14" viewBox="0 0 9 14"><path d="M1 1 V11.5 L3.6 9 L5.6 13 L7.3 12.2 L5.3 8.3 L8.6 8.3Z" fill="#fff" stroke="#000" stroke-width="0.9"/></svg>
<div style="left:1088px;top:62.3px;width:381px;height:10.6px;background:#2b2b2b"></div>
<div style="left:1088px;top:62.3px;width:40.700000000000045px;height:10.600000000000009px;background:#3c3c3c"></div>
<div style="left:1128.7px;top:62.3px;width:1px;height:10.600000000000009px;background:#1c1c1c"></div>
<div style="left:1091.50px;top:62.80px;height:10px;line-height:10px;font-size:5.6px;color:#c0c0c0;white-space:nowrap;">scatter1</div>
<svg style="left:1122.6px;top:65.6px;" width="4" height="4" viewBox="0 0 4 4"><path d="M0.5 0.5 L3.5 3.5 M3.5 0.5 L0.5 3.5" stroke="#d0d0d0" stroke-width="1.1"/></svg>
<svg style="left:1133.55px;top:64.35px;" width="6.5" height="6.5" viewBox="0 0 6.5 6.5"><path d="M3.25 0.5 V6.0 M0.5 3.25 H6.0" stroke="#e0e0e0" stroke-width="1.6"/></svg>
<div style="left:1450px;top:65px;width:6px;height:5px;background:#e0e0e0"></div>
<svg style="left:1460.5px;top:65.1px;" width="5" height="5" viewBox="0 0 5 5"><path d="M0.5 1 H4.5 L2.5 4.5Z" fill="#e0e0e0"/></svg>
<div style="left:1088px;top:72.9px;width:381px;height:20px;background:#3a3a3a"></div>
<svg style="left:1091.7px;top:79px;" width="10" height="9" viewBox="0 0 10 9"><path d="M0 4 L4.5 0.5 V2.5 H9 V5.5 H4.5 V7.5Z" fill="#d8d8d8"/><path d="M7 7 L9 8 L7 9Z" fill="#ccc"/></svg>
<svg style="left:1105.7px;top:79.5px;" width="9" height="8" viewBox="0 0 9 8"><path d="M9 4 L4.5 0.5 V2.5 H0 V5.5 H4.5 V7.5Z" fill="#6a6a6a"/></svg>
<div style="left:1119.7px;top:76.4px;width:317.29999999999995px;height:13.199999999999989px;background:#333;border-top:1px solid #1a1a1a;border-left:1px solid #1a1a1a"></div>
<svg style="left:1122.7px;top:78.4px;" width="10" height="10" viewBox="0 0 10 10"><rect x="0.5" y="3" width="9" height="6.5" fill="#777"/><path d="M0.5 3 L9.5 0.5" stroke="#ddd" stroke-width="1.6" stroke-dasharray="1.5 1"/><rect x="1.5" y="6" width="3" height="2" fill="#ccc"/><rect x="5.5" y="6" width="3" height="2" fill="#aaa"/></svg>
<div style="left:1135.60px;top:77.50px;height:11px;line-height:11px;font-size:6.3px;color:#d0d0d0;white-space:nowrap;transform:scaleX(0.940);transform-origin:0 50%;">obj</div>
<svg style="left:1145.7px;top:76.4px;" width="4" height="13.199999999999989" viewBox="0 0 4 13.199999999999989"><path d="M0.5 0 L3 6.6 L0.5 13.2" stroke="#222" fill="none" stroke-dasharray="1 1"/></svg>
<svg style="left:1152.7px;top:77.9px;" width="12" height="11" viewBox="0 0 12 11"><path d="M1 1 L5 0 V7 L1 8Z" fill="#4a7ad0"/><circle cx="8.5" cy="6" r="3" fill="#e03020"/><path d="M2.5 10.5 L5.5 4 L8.5 10.5Z" fill="#f0d020"/></svg>
<div style="left:1165.70px;top:77.50px;height:11px;line-height:11px;font-size:6.3px;color:#d8d8d8;white-space:nowrap;transform:scaleX(0.981);transform-origin:0 50%;">GEO_lemon</div>
<div style="left:1429px;top:76.4px;width:8px;height:13.2px;background:#2a2a2a"></div>
<svg style="left:1431.0px;top:81.0px;" width="4" height="4" viewBox="0 0 4 4"><path d="M0.5 1 H3.5 L2.0 3.5Z" fill="#888"/></svg>
<svg style="left:1442px;top:78px;" width="12" height="10" viewBox="0 0 12 10"><path d="M0.5 5 H5" stroke="#ddd" stroke-width="1.2"/><path d="M5.5 1 V9" stroke="#ddd" stroke-width="1.3"/><rect x="6.5" y="2.5" width="4.5" height="5" fill="#cfcfcf"/></svg>
<svg style="left:1455px;top:76.6px;" width="13" height="13" viewBox="0 0 13 13"><circle cx="6.5" cy="6.5" r="5.8" fill="none" stroke="#5a88d0" stroke-width="0.9"/><circle cx="6.5" cy="6.5" r="3.6" fill="none" stroke="#5a88d0" stroke-width="0.9"/><circle cx="6.5" cy="6.5" r="1.2" fill="#5a88d0"/></svg>
<div style="left:1088px;top:92.9px;width:381px;height:15.2px;background:#393939;border-top:1px solid #444"></div>
<div style="left:1089px;top:108.1px;width:380px;height:1px;background:#151515"></div>
<svg style="left:1091px;top:96px;" width="11" height="11" viewBox="0 0 11 11"><path d="M0 5 L5 3 L10 5 L5 7Z" fill="#d8c040"/><path d="M5 1 V9 M1 5 H10" stroke="#aaa" stroke-width="0.7"/><path d="M3 9.5 L5 11 L7 9.5Z" fill="#888"/></svg>
<div style="left:1103.40px;top:94.10px;height:13px;line-height:13px;font-size:7.2px;color:#e4e4e4;white-space:nowrap;transform:scaleX(0.938);transform-origin:0 50%;">Scatter</div>
<div style="left:1131.3px;top:96px;width:260.6px;height:11px;background:#121212"></div>
<div style="left:1132.70px;top:95.50px;height:12px;line-height:12px;font-size:7px;color:#e8e8e8;white-space:nowrap;font-family:"Liberation Mono",monospace;transform:scaleX(0.952);transform-origin:0 50%;">scatter1</div>
<svg style="left:1396px;top:95.5px;" width="10" height="11" viewBox="0 0 10 11"><circle cx="5" cy="5" r="2.5" fill="none" stroke="#e0e0e0" stroke-width="1.5"/><path d="M5 0.5 V9.5 M0.5 5 H9.5 M1.8 1.8 L8.2 8.2 M8.2 1.8 L1.8 8.2" stroke="#e0e0e0" stroke-width="1.2"/><path d="M7 10 L9 10 L8 11Z" fill="#aaa"/></svg>
<svg style="left:1411px;top:95.5px;" width="11" height="11" viewBox="0 0 11 11"><path d="M1 10 Q3 6 6 7 L10 1" stroke="#ccc" stroke-width="1.3" fill="none"/><path d="M1 10 Q4 10 6 7" fill="#bbb"/></svg>
<svg style="left:1425px;top:95.5px;" width="11" height="11" viewBox="0 0 11 11"><circle cx="4.5" cy="4.5" r="3.5" fill="none" stroke="#ddd" stroke-width="1.1"/><path d="M7 7 L10.5 10.5" stroke="#ddd" stroke-width="1.4"/></svg>
<svg style="left:1440px;top:95.5px;" width="11" height="11" viewBox="0 0 11 11"><circle cx="5.5" cy="5.5" r="4.8" fill="none" stroke="#ddd" stroke-width="0.9"/><path d="M5.5 4.5 V8.5" stroke="#ddd" stroke-width="1.2"/><circle cx="5.5" cy="2.8" r="0.7" fill="#ddd"/></svg>
<svg style="left:1455px;top:95.5px;" width="11" height="11" viewBox="0 0 11 11"><circle cx="5.5" cy="5.5" r="4.8" fill="none" stroke="#ddd" stroke-width="0.9"/><text x="5.5" y="8.3" font-size="7.5" font-weight="bold" text-anchor="middle" fill="#ddd" font-family="Liberation Sans">?</text></svg>
<div style="left:1088px;top:109.1px;width:381px;height:657px;background:#393939"></div>
<div style="left:1152.00px;top:111.50px;height:12px;line-height:12px;font-size:6.4px;color:#d2d2d2;white-space:nowrap;transform:scaleX(0.973);transform-origin:0 50%;">Group</div>
<div style="left:1176.6px;top:112.4px;width:259.4px;height:10.2px;background:#121212"></div>
<div style="left:1436px;top:112.4px;width:11.3px;height:10.2px;background:#2a2a2a"></div>
<svg style="left:1439.6px;top:115.5px;" width="4" height="4" viewBox="0 0 4 4"><path d="M0.5 1 H3.5 L2.0 3.5Z" fill="#777"/></svg>
<svg style="left:1452px;top:112px;" width="9" height="11" viewBox="0 0 9 11"><path d="M1 0.5 L8 5.5 L1 10.5Z" fill="#e8e8e8"/></svg>
<div style="left:1089.7px;top:125.8px;width:32.1px;height:12.1px;background:#474747"></div>
<div style="left:1093.60px;top:126.00px;height:12px;line-height:12px;font-size:6.4px;color:#e0e0e0;white-space:nowrap;font-weight:bold;transform:scaleX(0.972);transform-origin:0 50%;">Options</div>
<div style="left:1123px;top:125.8px;width:59.5px;height:12.1px;background:linear-gradient(#414141,#363636)"></div>
<div style="left:1126.90px;top:126.00px;height:12px;line-height:12px;font-size:6.4px;color:#cfcfcf;white-space:nowrap;transform:scaleX(1.051);transform-origin:0 50%;">Output Attributes</div>
<div style="left:1089.8px;top:137.9px;width:379.2px;height:209.5px;background:#3c3c3c;border-top:1px solid #424242"></div>
<div style="left:1143.00px;top:142.50px;height:12px;line-height:12px;font-size:6.4px;color:#d2d2d2;white-space:nowrap;transform:scaleX(0.986);transform-origin:0 50%;">Generate</div>
<div style="left:1176.6px;top:142.2px;width:77.2px;height:11.8px;background:linear-gradient(#4a4a4a,#3e3e3e);border-bottom:1px solid #222"></div>
<div style="left:1245.5px;top:142.2px;width:8.3px;height:11.8px;background:#353535"></div>
<svg style="left:1247.3px;top:144.5px;" width="5" height="7" viewBox="0 0 5 7"><path d="M0.5 3 L2.5 0.5 L4.5 3 Z M0.5 4 L2.5 6.5 L4.5 4 Z" fill="#aaa"/></svg>
<div style="left:1184.30px;top:142.60px;height:12px;line-height:12px;font-size:6.4px;color:#d8d8d8;white-space:nowrap;transform:scaleX(0.961);transform-origin:0 50%;">By Density</div>
<div style="left:1176.6px;top:159.3px;width:6.8px;height:7px;background:#191919"></div>
<div style="left:1187.80px;top:156.80px;height:12px;line-height:12px;font-size:6.4px;color:#d2d2d2;white-space:nowrap;">Scatter on Voxels Independently</div>
<div style="left:1099.3px;top:172.2px;width:6.8px;height:7px;background:#191919"></div>
<svg style="left:1099.3px;top:171.7px;" width="7.5" height="8" viewBox="0 0 7.5 8"><path d="M1 4 L3 6.8 L6.8 0.8" stroke="#f0f0f0" stroke-width="1.6" fill="none"/></svg>
<div style="left:1118.40px;top:169.70px;height:12px;line-height:12px;font-size:6.4px;color:#d2d2d2;white-space:nowrap;transform:scaleX(1.010);transform-origin:0 50%;">Force Total Count</div>
<div style="left:1176.6px;top:169.79999999999998px;width:42.0px;height:11.7px;background:#151515"></div>
<div style="left:1178.00px;top:169.70px;height:12px;line-height:12px;font-size:7px;color:#ececec;white-space:nowrap;">3</div>
<div style="left:1221.3px;top:174.6px;width:240.70000000000005px;height:2.3px;background:#0b0b0b"></div>
<div style="left:1221.3px;top:174.89999999999998px;width:22.700000000000045px;height:1.7px;background:#2458ac"></div>
<svg style="left:1223.3px;top:178.2px;" width="240.70000000000005" height="2" viewBox="0 0 240.70000000000005 2"><rect x="0.0" y="0" width="0.9" height="1" fill="#707070"/><rect x="8.7" y="0" width="0.9" height="1" fill="#707070"/><rect x="17.4" y="0" width="0.9" height="1" fill="#707070"/><rect x="26.1" y="0" width="0.9" height="1" fill="#707070"/><rect x="34.8" y="0" width="0.9" height="1" fill="#707070"/><rect x="43.5" y="0" width="0.9" height="1" fill="#707070"/><rect x="52.2" y="0" width="0.9" height="1" fill="#707070"/><rect x="60.9" y="0" width="0.9" height="1" fill="#707070"/><rect x="69.6" y="0" width="0.9" height="1" fill="#707070"/><rect x="78.3" y="0" width="0.9" height="1" fill="#707070"/><rect x="87.0" y="0" width="0.9" height="1" fill="#707070"/><rect x="95.7" y="0" width="0.9" height="1" fill="#707070"/><rect x="104.4" y="0" width="0.9" height="1" fill="#707070"/><rect x="113.1" y="0" width="0.9" height="1" fill="#707070"/><rect x="121.8" y="0" width="0.9" height="1" fill="#707070"/><rect x="130.5" y="0" width="0.9" height="1" fill="#707070"/><rect x="139.2" y="0" width="0.9" height="1" fill="#707070"/><rect x="147.9" y="0" width="0.9" height="1" fill="#707070"/><rect x="156.6" y="0" width="0.9" height="1" fill="#707070"/><rect x="165.3" y="0" width="0.9" height="1" fill="#707070"/><rect x="174.0" y="0" width="0.9" height="1" fill="#707070"/><rect x="182.7" y="0" width="0.9" height="1" fill="#707070"/><rect x="191.4" y="0" width="0.9" height="1" fill="#707070"/><rect x="200.1" y="0" width="0.9" height="1" fill="#707070"/><rect x="208.8" y="0" width="0.9" height="1" fill="#707070"/><rect x="217.5" y="0" width="0.9" height="1" fill="#707070"/><rect x="226.2" y="0" width="0.9" height="1" fill="#707070"/><rect x="234.9" y="0" width="0.9" height="1" fill="#707070"/></svg>
<div style="left:1243.1px;top:169.89999999999998px;width:1.9px;height:11.6px;background:#9c9c9c"></div>
<div style="left:1131.50px;top:183.40px;height:12px;line-height:12px;font-size:6.4px;color:#7a7a7a;white-space:nowrap;transform:scaleX(0.966);transform-origin:0 50%;">Density Scale</div>
<div style="left:1176.6px;top:183.5px;width:42.0px;height:11.7px;background:#333"></div>
<div style="left:1178.00px;top:183.40px;height:12px;line-height:12px;font-size:7px;color:#6a6a6a;white-space:nowrap;">10</div>
<div style="left:1221.3px;top:188.3px;width:240.70000000000005px;height:2.3px;background:#353535"></div>
<svg style="left:1223.3px;top:191.9px;" width="240.70000000000005" height="2" viewBox="0 0 240.70000000000005 2"><rect x="0.0" y="0" width="0.9" height="1" fill="#505050"/><rect x="8.7" y="0" width="0.9" height="1" fill="#505050"/><rect x="17.4" y="0" width="0.9" height="1" fill="#505050"/><rect x="26.1" y="0" width="0.9" height="1" fill="#505050"/><rect x="34.8" y="0" width="0.9" height="1" fill="#505050"/><rect x="43.5" y="0" width="0.9" height="1" fill="#505050"/><rect x="52.2" y="0" width="0.9" height="1" fill="#505050"/><rect x="60.9" y="0" width="0.9" height="1" fill="#505050"/><rect x="69.6" y="0" width="0.9" height="1" fill="#505050"/><rect x="78.3" y="0" width="0.9" height="1" fill="#505050"/><rect x="87.0" y="0" width="0.9" height="1" fill="#505050"/><rect x="95.7" y="0" width="0.9" height="1" fill="#505050"/><rect x="104.4" y="0" width="0.9" height="1" fill="#505050"/><rect x="113.1" y="0" width="0.9" height="1" fill="#505050"/><rect x="121.8" y="0" width="0.9" height="1" fill="#505050"/><rect x="130.5" y="0" width="0.9" height="1" fill="#505050"/><rect x="139.2" y="0" width="0.9" height="1" fill="#505050"/><rect x="147.9" y="0" width="0.9" height="1" fill="#505050"/><rect x="156.6" y="0" width="0.9" height="1" fill="#505050"/><rect x="165.3" y="0" width="0.9" height="1" fill="#505050"/><rect x="174.0" y="0" width="0.9" height="1" fill="#505050"/><rect x="182.7" y="0" width="0.9" height="1" fill="#505050"/><rect x="191.4" y="0" width="0.9" height="1" fill="#505050"/><rect x="200.1" y="0" width="0.9" height="1" fill="#505050"/><rect x="208.8" y="0" width="0.9" height="1" fill="#505050"/><rect x="217.5" y="0" width="0.9" height="1" fill="#505050"/><rect x="226.2" y="0" width="0.9" height="1" fill="#505050"/><rect x="234.9" y="0" width="0.9" height="1" fill="#505050"/></svg>
<div style="left:1316.5px;top:183.6px;width:1.9px;height:11.6px;background:#555"></div>
<div style="left:1099.3px;top:199.8px;width:6.8px;height:7px;background:#191919"></div>
<div style="left:1120.70px;top:197.30px;height:12px;line-height:12px;font-size:6.4px;color:#7a7a7a;white-space:nowrap;transform:scaleX(1.043);transform-origin:0 50%;">Density Attribute</div>
<div style="left:1176.6px;top:197.3px;width:285px;height:12px;background:#333"></div>
<div style="left:1449.5px;top:197.3px;width:12px;height:12px;background:#363636"></div>
<svg style="left:1453.5px;top:201.3px;" width="4" height="4" viewBox="0 0 4 4"><path d="M0.5 1 H3.5 L2.0 3.5Z" fill="#5a5a5a"/></svg>
<div style="left:1179.00px;top:197.30px;height:12px;line-height:12px;font-size:7px;color:#5c5c5c;white-space:nowrap;font-family:"Liberation Mono",monospace;">density</div>
<div style="left:1099.3px;top:213.8px;width:6.8px;height:7px;background:#191919"></div>
<div style="left:1114.90px;top:211.30px;height:12px;line-height:12px;font-size:6.4px;color:#7a7a7a;white-space:nowrap;">Override Prim Area</div>
<div style="left:1176.6px;top:211.3px;width:285px;height:12px;background:#333"></div>
<div style="left:1449.5px;top:211.3px;width:12px;height:12px;background:#363636"></div>
<svg style="left:1453.5px;top:215.3px;" width="4" height="4" viewBox="0 0 4 4"><path d="M0.5 1 H3.5 L2.0 3.5Z" fill="#5a5a5a"/></svg>
<div style="left:1179.00px;top:211.30px;height:12px;line-height:12px;font-size:7px;color:#5c5c5c;white-space:nowrap;font-family:"Liberation Mono",monospace;">area</div>
<div style="left:1176.6px;top:226.7px;width:6.8px;height:7px;background:#2c2c2c"></div>
<div style="left:1187.80px;top:224.20px;height:12px;line-height:12px;font-size:6.4px;color:#7a7a7a;white-space:nowrap;transform:scaleX(0.963);transform-origin:0 50%;">Use Area for 2D Volumes</div>
<div style="left:1099.3px;top:240.0px;width:6.8px;height:7px;background:#191919"></div>
<svg style="left:1099.3px;top:239.5px;" width="7.5" height="8" viewBox="0 0 7.5 8"><path d="M1 4 L3 6.8 L6.8 0.8" stroke="#f0f0f0" stroke-width="1.6" fill="none"/></svg>
<div style="left:1124.80px;top:237.50px;height:12px;line-height:12px;font-size:6.4px;color:#d2d2d2;white-space:nowrap;transform:scaleX(1.017);transform-origin:0 50%;">Max Point Limit</div>
<div style="left:1176.6px;top:237.6px;width:42.0px;height:11.7px;background:#151515"></div>
<div style="left:1178.00px;top:237.50px;height:12px;line-height:12px;font-size:7px;color:#ececec;white-space:nowrap;">1000000</div>
<div style="left:1221.3px;top:242.4px;width:240.70000000000005px;height:2.3px;background:#0b0b0b"></div>
<div style="left:1221.3px;top:242.7px;width:179.70000000000005px;height:1.7px;background:#2458ac"></div>
<svg style="left:1223.3px;top:246.0px;" width="240.70000000000005" height="2" viewBox="0 0 240.70000000000005 2"><rect x="0.0" y="0" width="0.9" height="1" fill="#707070"/><rect x="8.7" y="0" width="0.9" height="1" fill="#707070"/><rect x="17.4" y="0" width="0.9" height="1" fill="#707070"/><rect x="26.1" y="0" width="0.9" height="1" fill="#707070"/><rect x="34.8" y="0" width="0.9" height="1" fill="#707070"/><rect x="43.5" y="0" width="0.9" height="1" fill="#707070"/><rect x="52.2" y="0" width="0.9" height="1" fill="#707070"/><rect x="60.9" y="0" width="0.9" height="1" fill="#707070"/><rect x="69.6" y="0" width="0.9" height="1" fill="#707070"/><rect x="78.3" y="0" width="0.9" height="1" fill="#707070"/><rect x="87.0" y="0" width="0.9" height="1" fill="#707070"/><rect x="95.7" y="0" width="0.9" height="1" fill="#707070"/><rect x="104.4" y="0" width="0.9" height="1" fill="#707070"/><rect x="113.1" y="0" width="0.9" height="1" fill="#707070"/><rect x="121.8" y="0" width="0.9" height="1" fill="#707070"/><rect x="130.5" y="0" width="0.9" height="1" fill="#707070"/><rect x="139.2" y="0" width="0.9" height="1" fill="#707070"/><rect x="147.9" y="0" width="0.9" height="1" fill="#707070"/><rect x="156.6" y="0" width="0.9" height="1" fill="#707070"/><rect x="165.3" y="0" width="0.9" height="1" fill="#707070"/><rect x="174.0" y="0" width="0.9" height="1" fill="#707070"/><rect x="182.7" y="0" width="0.9" height="1" fill="#707070"/><rect x="191.4" y="0" width="0.9" height="1" fill="#707070"/><rect x="200.1" y="0" width="0.9" height="1" fill="#707070"/><rect x="208.8" y="0" width="0.9" height="1" fill="#707070"/><rect x="217.5" y="0" width="0.9" height="1" fill="#707070"/><rect x="226.2" y="0" width="0.9" height="1" fill="#707070"/><rect x="234.9" y="0" width="0.9" height="1" fill="#707070"/></svg>
<div style="left:1400.1px;top:237.7px;width:1.9px;height:11.6px;background:#9c9c9c"></div>
<div style="left:1135.00px;top:251.40px;height:12px;line-height:12px;font-size:6.4px;color:#d2d2d2;white-space:nowrap;transform:scaleX(0.974);transform-origin:0 50%;">Global Seed</div>
<div style="left:1176.6px;top:251.49999999999997px;width:42.0px;height:11.7px;background:#151515"></div>
<div style="left:1178.00px;top:251.40px;height:12px;line-height:12px;font-size:7px;color:#ececec;white-space:nowrap;">0</div>
<div style="left:1221.3px;top:256.29999999999995px;width:240.70000000000005px;height:2.3px;background:#0b0b0b"></div>
<svg style="left:1223.3px;top:259.9px;" width="240.70000000000005" height="2" viewBox="0 0 240.70000000000005 2"><rect x="0.0" y="0" width="0.9" height="1" fill="#707070"/><rect x="8.7" y="0" width="0.9" height="1" fill="#707070"/><rect x="17.4" y="0" width="0.9" height="1" fill="#707070"/><rect x="26.1" y="0" width="0.9" height="1" fill="#707070"/><rect x="34.8" y="0" width="0.9" height="1" fill="#707070"/><rect x="43.5" y="0" width="0.9" height="1" fill="#707070"/><rect x="52.2" y="0" width="0.9" height="1" fill="#707070"/><rect x="60.9" y="0" width="0.9" height="1" fill="#707070"/><rect x="69.6" y="0" width="0.9" height="1" fill="#707070"/><rect x="78.3" y="0" width="0.9" height="1" fill="#707070"/><rect x="87.0" y="0" width="0.9" height="1" fill="#707070"/><rect x="95.7" y="0" width="0.9" height="1" fill="#707070"/><rect x="104.4" y="0" width="0.9" height="1" fill="#707070"/><rect x="113.1" y="0" width="0.9" height="1" fill="#707070"/><rect x="121.8" y="0" width="0.9" height="1" fill="#707070"/><rect x="130.5" y="0" width="0.9" height="1" fill="#707070"/><rect x="139.2" y="0" width="0.9" height="1" fill="#707070"/><rect x="147.9" y="0" width="0.9" height="1" fill="#707070"/><rect x="156.6" y="0" width="0.9" height="1" fill="#707070"/><rect x="165.3" y="0" width="0.9" height="1" fill="#707070"/><rect x="174.0" y="0" width="0.9" height="1" fill="#707070"/><rect x="182.7" y="0" width="0.9" height="1" fill="#707070"/><rect x="191.4" y="0" width="0.9" height="1" fill="#707070"/><rect x="200.1" y="0" width="0.9" height="1" fill="#707070"/><rect x="208.8" y="0" width="0.9" height="1" fill="#707070"/><rect x="217.5" y="0" width="0.9" height="1" fill="#707070"/><rect x="226.2" y="0" width="0.9" height="1" fill="#707070"/><rect x="234.9" y="0" width="0.9" height="1" fill="#707070"/></svg>
<div style="left:1220.8999999999999px;top:251.59999999999997px;width:1.9px;height:11.6px;background:#9c9c9c"></div>
<div style="left:1099.3px;top:267.8px;width:6.8px;height:7px;background:#2c2c2c"></div>
<div style="left:1107.70px;top:265.30px;height:12px;line-height:12px;font-size:6.4px;color:#7a7a7a;white-space:nowrap;transform:scaleX(1.037);transform-origin:0 50%;">Primitive Seed Attri...</div>
<div style="left:1176.6px;top:265.3px;width:285px;height:12px;background:#333"></div>
<div style="left:1449.5px;top:265.3px;width:12px;height:12px;background:#363636"></div>
<svg style="left:1453.5px;top:269.3px;" width="4" height="4" viewBox="0 0 4 4"><path d="M0.5 1 H3.5 L2.0 3.5Z" fill="#5a5a5a"/></svg>
<div style="left:1179.00px;top:265.30px;height:12px;line-height:12px;font-size:7px;color:#5c5c5c;white-space:nowrap;font-family:"Liberation Mono",monospace;">primid</div>
<div style="left:1176.6px;top:280.7px;width:6.8px;height:7px;background:#191919"></div>
<svg style="left:1176.6px;top:280.2px;" width="7.5" height="8" viewBox="0 0 7.5 8"><path d="M1 4 L3 6.8 L6.8 0.8" stroke="#f0f0f0" stroke-width="1.6" fill="none"/></svg>
<div style="left:1187.80px;top:278.20px;height:12px;line-height:12px;font-size:6.4px;color:#d2d2d2;white-space:nowrap;transform:scaleX(0.988);transform-origin:0 50%;">Randomize Point Order</div>
<div style="left:1099.3px;top:293.9px;width:6.8px;height:7px;background:#191919"></div>
<svg style="left:1099.3px;top:293.4px;" width="7.5" height="8" viewBox="0 0 7.5 8"><path d="M1 4 L3 6.8 L6.8 0.8" stroke="#f0f0f0" stroke-width="1.6" fill="none"/></svg>
<div style="left:1124.80px;top:291.40px;height:12px;line-height:12px;font-size:6.4px;color:#d2d2d2;white-space:nowrap;">Relax Iterations</div>
<div style="left:1176.6px;top:291.5px;width:42.0px;height:11.7px;background:#151515"></div>
<div style="left:1178.00px;top:291.40px;height:12px;line-height:12px;font-size:7px;color:#ececec;white-space:nowrap;">18</div>
<div style="left:1221.3px;top:296.29999999999995px;width:240.70000000000005px;height:2.3px;background:#0b0b0b"></div>
<div style="left:1221.3px;top:296.59999999999997px;width:24.0px;height:1.7px;background:#2458ac"></div>
<svg style="left:1223.3px;top:299.9px;" width="240.70000000000005" height="2" viewBox="0 0 240.70000000000005 2"><rect x="0.0" y="0" width="0.9" height="1" fill="#707070"/><rect x="8.7" y="0" width="0.9" height="1" fill="#707070"/><rect x="17.4" y="0" width="0.9" height="1" fill="#707070"/><rect x="26.1" y="0" width="0.9" height="1" fill="#707070"/><rect x="34.8" y="0" width="0.9" height="1" fill="#707070"/><rect x="43.5" y="0" width="0.9" height="1" fill="#707070"/><rect x="52.2" y="0" width="0.9" height="1" fill="#707070"/><rect x="60.9" y="0" width="0.9" height="1" fill="#707070"/><rect x="69.6" y="0" width="0.9" height="1" fill="#707070"/><rect x="78.3" y="0" width="0.9" height="1" fill="#707070"/><rect x="87.0" y="0" width="0.9" height="1" fill="#707070"/><rect x="95.7" y="0" width="0.9" height="1" fill="#707070"/><rect x="104.4" y="0" width="0.9" height="1" fill="#707070"/><rect x="113.1" y="0" width="0.9" height="1" fill="#707070"/><rect x="121.8" y="0" width="0.9" height="1" fill="#707070"/><rect x="130.5" y="0" width="0.9" height="1" fill="#707070"/><rect x="139.2" y="0" width="0.9" height="1" fill="#707070"/><rect x="147.9" y="0" width="0.9" height="1" fill="#707070"/><rect x="156.6" y="0" width="0.9" height="1" fill="#707070"/><rect x="165.3" y="0" width="0.9" height="1" fill="#707070"/><rect x="174.0" y="0" width="0.9" height="1" fill="#707070"/><rect x="182.7" y="0" width="0.9" height="1" fill="#707070"/><rect x="191.4" y="0" width="0.9" height="1" fill="#707070"/><rect x="200.1" y="0" width="0.9" height="1" fill="#707070"/><rect x="208.8" y="0" width="0.9" height="1" fill="#707070"/><rect x="217.5" y="0" width="0.9" height="1" fill="#707070"/><rect x="226.2" y="0" width="0.9" height="1" fill="#707070"/><rect x="234.9" y="0" width="0.9" height="1" fill="#707070"/></svg>
<div style="left:1244.3999999999999px;top:291.59999999999997px;width:1.9px;height:11.6px;background:#9c9c9c"></div>
<div style="left:1176.6px;top:307.0px;width:6.8px;height:7px;background:#191919"></div>
<div style="left:1187.80px;top:304.50px;height:12px;line-height:12px;font-size:6.4px;color:#d2d2d2;white-space:nowrap;transform:scaleX(0.981);transform-origin:0 50%;">Use Geometric Normals</div>
<div style="left:1129.40px;top:317.90px;height:12px;line-height:12px;font-size:6.4px;color:#d2d2d2;white-space:nowrap;transform:scaleX(0.959);transform-origin:0 50%;">Scale Radii By</div>
<div style="left:1176.6px;top:318.0px;width:42.0px;height:11.7px;background:#151515"></div>
<div style="left:1178.00px;top:317.90px;height:12px;line-height:12px;font-size:7px;color:#6a6a6a;white-space:nowrap;">1</div>
<div style="left:1221.3px;top:322.79999999999995px;width:240.70000000000005px;height:2.3px;background:#0b0b0b"></div>
<div style="left:1221.3px;top:323.09999999999997px;width:120.40000000000009px;height:1.7px;background:#2458ac"></div>
<svg style="left:1223.3px;top:326.4px;" width="240.70000000000005" height="2" viewBox="0 0 240.70000000000005 2"><rect x="0.0" y="0" width="0.9" height="1" fill="#707070"/><rect x="8.7" y="0" width="0.9" height="1" fill="#707070"/><rect x="17.4" y="0" width="0.9" height="1" fill="#707070"/><rect x="26.1" y="0" width="0.9" height="1" fill="#707070"/><rect x="34.8" y="0" width="0.9" height="1" fill="#707070"/><rect x="43.5" y="0" width="0.9" height="1" fill="#707070"/><rect x="52.2" y="0" width="0.9" height="1" fill="#707070"/><rect x="60.9" y="0" width="0.9" height="1" fill="#707070"/><rect x="69.6" y="0" width="0.9" height="1" fill="#707070"/><rect x="78.3" y="0" width="0.9" height="1" fill="#707070"/><rect x="87.0" y="0" width="0.9" height="1" fill="#707070"/><rect x="95.7" y="0" width="0.9" height="1" fill="#707070"/><rect x="104.4" y="0" width="0.9" height="1" fill="#707070"/><rect x="113.1" y="0" width="0.9" height="1" fill="#707070"/><rect x="121.8" y="0" width="0.9" height="1" fill="#707070"/><rect x="130.5" y="0" width="0.9" height="1" fill="#707070"/><rect x="139.2" y="0" width="0.9" height="1" fill="#707070"/><rect x="147.9" y="0" width="0.9" height="1" fill="#707070"/><rect x="156.6" y="0" width="0.9" height="1" fill="#707070"/><rect x="165.3" y="0" width="0.9" height="1" fill="#707070"/><rect x="174.0" y="0" width="0.9" height="1" fill="#707070"/><rect x="182.7" y="0" width="0.9" height="1" fill="#707070"/><rect x="191.4" y="0" width="0.9" height="1" fill="#707070"/><rect x="200.1" y="0" width="0.9" height="1" fill="#707070"/><rect x="208.8" y="0" width="0.9" height="1" fill="#707070"/><rect x="217.5" y="0" width="0.9" height="1" fill="#707070"/><rect x="226.2" y="0" width="0.9" height="1" fill="#707070"/><rect x="234.9" y="0" width="0.9" height="1" fill="#707070"/></svg>
<div style="left:1340.8px;top:318.09999999999997px;width:1.9px;height:11.6px;background:#9c9c9c"></div>
<div style="left:1099.3px;top:334.0px;width:6.8px;height:7px;background:#191919"></div>
<svg style="left:1099.3px;top:333.5px;" width="7.5" height="8" viewBox="0 0 7.5 8"><path d="M1 4 L3 6.8 L6.8 0.8" stroke="#f0f0f0" stroke-width="1.6" fill="none"/></svg>
<div style="left:1119.90px;top:331.50px;height:12px;line-height:12px;font-size:6.4px;color:#d2d2d2;white-space:nowrap;transform:scaleX(0.951);transform-origin:0 50%;">Max Relax Radius</div>
<div style="left:1176.6px;top:331.6px;width:42.0px;height:11.7px;background:#151515"></div>
<div style="left:1178.00px;top:331.50px;height:12px;line-height:12px;font-size:7px;color:#ececec;white-space:nowrap;">18</div>
<div style="left:1221.3px;top:336.4px;width:240.70000000000005px;height:2.3px;background:#0b0b0b"></div>
<div style="left:1221.3px;top:336.7px;width:24.0px;height:1.7px;background:#2458ac"></div>
<svg style="left:1223.3px;top:340.0px;" width="240.70000000000005" height="2" viewBox="0 0 240.70000000000005 2"><rect x="0.0" y="0" width="0.9" height="1" fill="#707070"/><rect x="8.7" y="0" width="0.9" height="1" fill="#707070"/><rect x="17.4" y="0" width="0.9" height="1" fill="#707070"/><rect x="26.1" y="0" width="0.9" height="1" fill="#707070"/><rect x="34.8" y="0" width="0.9" height="1" fill="#707070"/><rect x="43.5" y="0" width="0.9" height="1" fill="#707070"/><rect x="52.2" y="0" width="0.9" height="1" fill="#707070"/><rect x="60.9" y="0" width="0.9" height="1" fill="#707070"/><rect x="69.6" y="0" width="0.9" height="1" fill="#707070"/><rect x="78.3" y="0" width="0.9" height="1" fill="#707070"/><rect x="87.0" y="0" width="0.9" height="1" fill="#707070"/><rect x="95.7" y="0" width="0.9" height="1" fill="#707070"/><rect x="104.4" y="0" width="0.9" height="1" fill="#707070"/><rect x="113.1" y="0" width="0.9" height="1" fill="#707070"/><rect x="121.8" y="0" width="0.9" height="1" fill="#707070"/><rect x="130.5" y="0" width="0.9" height="1" fill="#707070"/><rect x="139.2" y="0" width="0.9" height="1" fill="#707070"/><rect x="147.9" y="0" width="0.9" height="1" fill="#707070"/><rect x="156.6" y="0" width="0.9" height="1" fill="#707070"/><rect x="165.3" y="0" width="0.9" height="1" fill="#707070"/><rect x="174.0" y="0" width="0.9" height="1" fill="#707070"/><rect x="182.7" y="0" width="0.9" height="1" fill="#707070"/><rect x="191.4" y="0" width="0.9" height="1" fill="#707070"/><rect x="200.1" y="0" width="0.9" height="1" fill="#707070"/><rect x="208.8" y="0" width="0.9" height="1" fill="#707070"/><rect x="217.5" y="0" width="0.9" height="1" fill="#707070"/><rect x="226.2" y="0" width="0.9" height="1" fill="#707070"/><rect x="234.9" y="0" width="0.9" height="1" fill="#707070"/></svg>
<div style="left:1244.3999999999999px;top:331.7px;width:1.9px;height:11.6px;background:#9c9c9c"></div>
<div style="left:0px;top:766px;width:1469px;height:5px;background:#4a4a4a;border-top:1px solid #7a7a7a"></div>
<div style="left:5px;top:771px;width:1464px;height:40.4px;background:#2d2d2d"></div>
<div style="left:0px;top:771px;width:4px;height:40.4px;background:#3a3a3a"></div>
<div style="left:4px;top:771px;width:1px;height:40.4px;background:#1a1a1a"></div>
<svg style="left:0.5px;top:806px;" width="4" height="3" viewBox="0 0 4 3"><path d="M0 0 H4 L2 3Z" fill="#111"/></svg>
<div style="left:8.2px;top:776px;width:14.7px;height:15.600000000000023px;background:linear-gradient(#4a4a4a,#3a3a3a);border:1px solid #262626"></div>
<svg style="left:8.2px;top:776px;" width="14.7" height="15.600000000000023" viewBox="0 0 14.7 15.600000000000023"><rect x="2.5" y="4.5" width="1.3" height="7" fill="#ddd"/><path d="M9 4.5 V11.5 L4.3 8Z M13 4.5 V11.5 L8.3 8Z" fill="#ddd"/></svg>
<div style="left:24.2px;top:776px;width:14.599999999999998px;height:15.600000000000023px;background:linear-gradient(#4a4a4a,#3a3a3a);border:1px solid #262626"></div>
<svg style="left:24.2px;top:776px;" width="14.599999999999998" height="15.600000000000023" viewBox="0 0 14.599999999999998 15.600000000000023"><path d="M10 4 V12 L4 8Z" fill="#ddd"/></svg>
<div style="left:40.2px;top:776px;width:14.5px;height:15.600000000000023px;background:#6b82aa;border:1px solid #262626"></div>
<svg style="left:40.2px;top:776px;" width="14.5" height="15.600000000000023" viewBox="0 0 14.5 15.600000000000023"><rect x="3.5" y="3.5" width="7.5" height="8.5" fill="#d8d8d8"/></svg>
<div style="left:56.1px;top:776px;width:13.600000000000001px;height:15.600000000000023px;background:linear-gradient(#4a4a4a,#3a3a3a);border:1px solid #262626"></div>
<svg style="left:56.1px;top:776px;" width="13.600000000000001" height="15.600000000000023" viewBox="0 0 13.600000000000001 15.600000000000023"><path d="M4.5 4 V12 L10.5 8Z" fill="#ddd"/></svg>
<div style="left:71.1px;top:776px;width:14.700000000000003px;height:15.600000000000023px;background:linear-gradient(#4a4a4a,#3a3a3a);border:1px solid #262626"></div>
<svg style="left:71.1px;top:776px;" width="14.700000000000003" height="15.600000000000023" viewBox="0 0 14.700000000000003 15.600000000000023"><path d="M1.5 4.5 V11.5 L6.2 8Z M5.5 4.5 V11.5 L10.2 8Z" fill="#ddd"/><rect x="11" y="4.5" width="1.3" height="7" fill="#ddd"/></svg>
<div style="left:88.2px;top:776px;width:26.2px;height:15.600000000000023px;background:#161616"></div>
<div style="left:90.00px;top:777.80px;height:12px;line-height:12px;font-size:6.5px;color:#c8c8c8;white-space:nowrap;">1</div>
<div style="left:115.7px;top:776px;width:14.299999999999997px;height:15.600000000000023px;background:linear-gradient(#4a4a4a,#3a3a3a);border:1px solid #262626"></div>
<svg style="left:115.7px;top:776px;" width="14.299999999999997" height="15.600000000000023" viewBox="0 0 14.299999999999997 15.600000000000023"><path d="M6 5 V11 L2.5 8Z" fill="#ccc"/><rect x="6" y="5" width="1" height="6" fill="#ccc"/><path d="M8.5 5 V11 L12 8Z" fill="#ccc"/><rect x="7.5" y="5" width="1" height="6" fill="#ccc"/></svg>
<div style="left:8.2px;top:796px;width:14.7px;height:12.299999999999955px;background:linear-gradient(#4a4a4a,#3a3a3a);border:1px solid #262626"></div>
<svg style="left:8.2px;top:796px;" width="14.7" height="12.299999999999955" viewBox="0 0 14.7 12.299999999999955"><rect x="4" y="2" width="6" height="7.5" fill="#e0e0e0"/><path d="M8 6 V11.5 L9.3 10.3 L10.5 12 L11.3 11.5 L10.2 9.8 L11.8 9.8Z" fill="#fff" stroke="#111" stroke-width="0.5"/></svg>
<div style="left:24.2px;top:796px;width:14.599999999999998px;height:12.299999999999955px;background:linear-gradient(#4a4a4a,#3a3a3a);border:1px solid #262626"></div>
<svg style="left:24.2px;top:796px;" width="14.599999999999998" height="12.299999999999955" viewBox="0 0 14.599999999999998 12.299999999999955"><ellipse cx="7.3" cy="6.2" rx="3" ry="4.5" fill="#999"/><path d="M3 3 Q1.5 6 3 9.5 M11.5 3 Q13 6 11.5 9.5" stroke="#ccc" fill="none"/></svg>
<div style="left:40.2px;top:796px;width:14.5px;height:12.299999999999955px;background:linear-gradient(#4a4a4a,#3a3a3a);border:1px solid #262626"></div>
<svg style="left:40.2px;top:796px;" width="14.5" height="12.299999999999955" viewBox="0 0 14.5 12.299999999999955"><path d="M3 8 H11 Q12 5 8 4 H5 L6 2.5" stroke="#eee" stroke-width="1" fill="none"/><rect x="2.5" y="8" width="9" height="1.5" fill="#111"/></svg>
<div style="left:56.1px;top:796px;width:13.999999999999993px;height:12.299999999999955px;background:#6b82aa;border:1px solid #262626"></div>
<svg style="left:56.1px;top:796px;" width="13.999999999999993" height="12.299999999999955" viewBox="0 0 13.999999999999993 12.299999999999955"><circle cx="7" cy="6.2" r="4.2" fill="none" stroke="#111" stroke-width="1.6"/><circle cx="7" cy="6.2" r="4.2" fill="none" stroke="#ddd" stroke-width="0.7"/><path d="M6 3.5 V8.5 L8.5 6.5" stroke="#ddd" fill="none"/></svg>
<div style="left:71.5px;top:796px;width:14.299999999999997px;height:12.299999999999955px;background:linear-gradient(#4a4a4a,#3a3a3a);border:1px solid #262626"></div>
<svg style="left:71.5px;top:796px;" width="14.299999999999997" height="12.299999999999955" viewBox="0 0 14.299999999999997 12.299999999999955"><path d="M2.5 3 V9 M5 3 V5 M8 3 V5 M11 3 V9" stroke="#aaa" stroke-width="0.9"/><path d="M11.5 9 L13 10.5 L11.5 12Z" fill="#999"/></svg>
<div style="left:87.1px;top:796px;width:14.700000000000003px;height:12.299999999999955px;background:linear-gradient(#4a4a4a,#3a3a3a);border:1px solid #262626"></div>
<svg style="left:87.1px;top:796px;" width="14.700000000000003" height="12.299999999999955" viewBox="0 0 14.700000000000003 12.299999999999955"><path d="M2.5 6.2 H12" stroke="#ddd" stroke-width="1"/><circle cx="7.3" cy="6.2" r="1.6" fill="#eee"/></svg>
<div style="left:104.2px;top:796px;width:12.799999999999997px;height:12.299999999999955px;background:linear-gradient(#4a4a4a,#3a3a3a);border:1px solid #262626"></div>
<svg style="left:104.2px;top:796px;" width="12.799999999999997" height="12.299999999999955" viewBox="0 0 12.799999999999997 12.299999999999955"><rect x="3.5" y="3.5" width="1" height="5.5" fill="#6a6a50"/><path d="M9.5 3.5 V9 L5 6.2Z" fill="#6a6a50"/></svg>
<div style="left:117.2px;top:796px;width:12.799999999999997px;height:12.299999999999955px;background:linear-gradient(#4a4a4a,#3a3a3a);border:1px solid #262626"></div>
<svg style="left:117.2px;top:796px;" width="12.799999999999997" height="12.299999999999955" viewBox="0 0 12.799999999999997 12.299999999999955"><path d="M3.5 3.5 V9 L8 6.2Z" fill="#6a6a50"/><rect x="8.5" y="3.5" width="1" height="5.5" fill="#6a6a50"/></svg>
<div style="left:133.2px;top:779px;width:715.9920000000001px;height:4.5px;background:#1b6ad0"></div>
<div style="left:133.2px;top:783.2px;width:1192.8px;height:0.9px;background:#9a9a9a"></div>
<svg style="left:133.2px;top:780.5px;" width="1200" height="9" viewBox="0 0 1200 9"><rect x="0.00" y="3" width="0.7" height="3.5" fill="#8a8a8a"/><rect x="4.97" y="3" width="0.7" height="3.5" fill="#8a8a8a"/><rect x="9.94" y="3" width="0.7" height="3.5" fill="#8a8a8a"/><rect x="14.90" y="3" width="0.7" height="3.5" fill="#8a8a8a"/><rect x="19.87" y="3" width="0.7" height="3.5" fill="#8a8a8a"/><rect x="24.84" y="3" width="0.7" height="3.5" fill="#8a8a8a"/><rect x="29.81" y="3" width="0.7" height="3.5" fill="#8a8a8a"/><rect x="34.78" y="3" width="0.7" height="3.5" fill="#8a8a8a"/><rect x="39.74" y="3" width="0.7" height="3.5" fill="#8a8a8a"/><rect x="44.71" y="3" width="0.7" height="3.5" fill="#8a8a8a"/><rect x="49.68" y="3" width="0.7" height="3.5" fill="#8a8a8a"/><rect x="54.65" y="3" width="0.7" height="3.5" fill="#8a8a8a"/><rect x="59.62" y="3" width="0.7" height="3.5" fill="#8a8a8a"/><rect x="64.58" y="3" width="0.7" height="3.5" fill="#8a8a8a"/><rect x="69.55" y="3" width="0.7" height="3.5" fill="#8a8a8a"/><rect x="74.52" y="3" width="0.7" height="3.5" fill="#8a8a8a"/><rect x="79.49" y="3" width="0.7" height="3.5" fill="#8a8a8a"/><rect x="84.46" y="3" width="0.7" height="3.5" fill="#8a8a8a"/><rect x="89.42" y="3" width="0.7" height="3.5" fill="#8a8a8a"/><rect x="94.39" y="3" width="0.7" height="3.5" fill="#8a8a8a"/><rect x="99.36" y="3" width="0.7" height="3.5" fill="#8a8a8a"/><rect x="104.33" y="3" width="0.7" height="3.5" fill="#8a8a8a"/><rect x="109.30" y="3" width="0.7" height="3.5" fill="#8a8a8a"/><rect x="114.26" y="0" width="0.9" height="7" fill="#d0d0d0"/><rect x="119.23" y="3" width="0.7" height="3.5" fill="#8a8a8a"/><rect x="124.20" y="3" width="0.7" height="3.5" fill="#8a8a8a"/><rect x="129.17" y="3" width="0.7" height="3.5" fill="#8a8a8a"/><rect x="134.14" y="3" width="0.7" height="3.5" fill="#8a8a8a"/><rect x="139.10" y="3" width="0.7" height="3.5" fill="#8a8a8a"/><rect x="144.07" y="3" width="0.7" height="3.5" fill="#8a8a8a"/><rect x="149.04" y="3" width="0.7" height="3.5" fill="#8a8a8a"/><rect x="154.01" y="3" width="0.7" height="3.5" fill="#8a8a8a"/><rect x="158.98" y="3" width="0.7" height="3.5" fill="#8a8a8a"/><rect x="163.94" y="3" width="0.7" height="3.5" fill="#8a8a8a"/><rect x="168.91" y="3" width="0.7" height="3.5" fill="#8a8a8a"/><rect x="173.88" y="3" width="0.7" height="3.5" fill="#8a8a8a"/><rect x="178.85" y="3" width="0.7" height="3.5" fill="#8a8a8a"/><rect x="183.82" y="3" width="0.7" height="3.5" fill="#8a8a8a"/><rect x="188.78" y="3" width="0.7" height="3.5" fill="#8a8a8a"/><rect x="193.75" y="3" width="0.7" height="3.5" fill="#8a8a8a"/><rect x="198.72" y="3" width="0.7" height="3.5" fill="#8a8a8a"/><rect x="203.69" y="3" width="0.7" height="3.5" fill="#8a8a8a"/><rect x="208.66" y="3" width="0.7" height="3.5" fill="#8a8a8a"/><rect x="213.62" y="3" width="0.7" height="3.5" fill="#8a8a8a"/><rect x="218.59" y="3" width="0.7" height="3.5" fill="#8a8a8a"/><rect x="223.56" y="3" width="0.7" height="3.5" fill="#8a8a8a"/><rect x="228.53" y="3" width="0.7" height="3.5" fill="#8a8a8a"/><rect x="233.50" y="0" width="0.9" height="7" fill="#d0d0d0"/><rect x="238.46" y="3" width="0.7" height="3.5" fill="#8a8a8a"/><rect x="243.43" y="3" width="0.7" height="3.5" fill="#8a8a8a"/><rect x="248.40" y="3" width="0.7" height="3.5" fill="#8a8a8a"/><rect x="253.37" y="3" width="0.7" height="3.5" fill="#8a8a8a"/><rect x="258.34" y="3" width="0.7" height="3.5" fill="#8a8a8a"/><rect x="263.30" y="3" width="0.7" height="3.5" fill="#8a8a8a"/><rect x="268.27" y="3" width="0.7" height="3.5" fill="#8a8a8a"/><rect x="273.24" y="3" width="0.7" height="3.5" fill="#8a8a8a"/><rect x="278.21" y="3" width="0.7" height="3.5" fill="#8a8a8a"/><rect x="283.18" y="3" width="0.7" height="3.5" fill="#8a8a8a"/><rect x="288.14" y="3" width="0.7" height="3.5" fill="#8a8a8a"/><rect x="293.11" y="3" width="0.7" height="3.5" fill="#8a8a8a"/><rect x="298.08" y="3" width="0.7" height="3.5" fill="#8a8a8a"/><rect x="303.05" y="3" width="0.7" height="3.5" fill="#8a8a8a"/><rect x="308.02" y="3" width="0.7" height="3.5" fill="#8a8a8a"/><rect x="312.98" y="3" width="0.7" height="3.5" fill="#8a8a8a"/><rect x="317.95" y="3" width="0.7" height="3.5" fill="#8a8a8a"/><rect x="322.92" y="3" width="0.7" height="3.5" fill="#8a8a8a"/><rect x="327.89" y="3" width="0.7" height="3.5" fill="#8a8a8a"/><rect x="332.86" y="3" width="0.7" height="3.5" fill="#8a8a8a"/><rect x="337.82" y="3" width="0.7" height="3.5" fill="#8a8a8a"/><rect x="342.79" y="3" width="0.7" height="3.5" fill="#8a8a8a"/><rect x="347.76" y="3" width="0.7" height="3.5" fill="#8a8a8a"/><rect x="352.73" y="0" width="0.9" height="7" fill="#d0d0d0"/><rect x="357.70" y="3" width="0.7" height="3.5" fill="#8a8a8a"/><rect x="362.66" y="3" width="0.7" height="3.5" fill="#8a8a8a"/><rect x="367.63" y="3" width="0.7" height="3.5" fill="#8a8a8a"/><rect x="372.60" y="3" width="0.7" height="3.5" fill="#8a8a8a"/><rect x="377.57" y="3" width="0.7" height="3.5" fill="#8a8a8a"/><rect x="382.54" y="3" width="0.7" height="3.5" fill="#8a8a8a"/><rect x="387.50" y="3" width="0.7" height="3.5" fill="#8a8a8a"/><rect x="392.47" y="3" width="0.7" height="3.5" fill="#8a8a8a"/><rect x="397.44" y="3" width="0.7" height="3.5" fill="#8a8a8a"/><rect x="402.41" y="3" width="0.7" height="3.5" fill="#8a8a8a"/><rect x="407.38" y="3" width="0.7" height="3.5" fill="#8a8a8a"/><rect x="412.34" y="3" width="0.7" height="3.5" fill="#8a8a8a"/><rect x="417.31" y="3" width="0.7" height="3.5" fill="#8a8a8a"/><rect x="422.28" y="3" width="0.7" height="3.5" fill="#8a8a8a"/><rect x="427.25" y="3" width="0.7" height="3.5" fill="#8a8a8a"/><rect x="432.22" y="3" width="0.7" height="3.5" fill="#8a8a8a"/><rect x="437.18" y="3" width="0.7" height="3.5" fill="#8a8a8a"/><rect x="442.15" y="3" width="0.7" height="3.5" fill="#8a8a8a"/><rect x="447.12" y="3" width="0.7" height="3.5" fill="#8a8a8a"/><rect x="452.09" y="3" width="0.7" height="3.5" fill="#8a8a8a"/><rect x="457.06" y="3" width="0.7" height="3.5" fill="#8a8a8a"/><rect x="462.02" y="3" width="0.7" height="3.5" fill="#8a8a8a"/><rect x="466.99" y="3" width="0.7" height="3.5" fill="#8a8a8a"/><rect x="471.96" y="0" width="0.9" height="7" fill="#d0d0d0"/><rect x="476.93" y="3" width="0.7" height="3.5" fill="#8a8a8a"/><rect x="481.90" y="3" width="0.7" height="3.5" fill="#8a8a8a"/><rect x="486.86" y="3" width="0.7" height="3.5" fill="#8a8a8a"/><rect x="491.83" y="3" width="0.7" height="3.5" fill="#8a8a8a"/><rect x="496.80" y="3" width="0.7" height="3.5" fill="#8a8a8a"/><rect x="501.77" y="3" width="0.7" height="3.5" fill="#8a8a8a"/><rect x="506.74" y="3" width="0.7" height="3.5" fill="#8a8a8a"/><rect x="511.70" y="3" width="0.7" height="3.5" fill="#8a8a8a"/><rect x="516.67" y="3" width="0.7" height="3.5" fill="#8a8a8a"/><rect x="521.64" y="3" width="0.7" height="3.5" fill="#8a8a8a"/><rect x="526.61" y="3" width="0.7" height="3.5" fill="#8a8a8a"/><rect x="531.58" y="3" width="0.7" height="3.5" fill="#8a8a8a"/><rect x="536.54" y="3" width="0.7" height="3.5" fill="#8a8a8a"/><rect x="541.51" y="3" width="0.7" height="3.5" fill="#8a8a8a"/><rect x="546.48" y="3" width="0.7" height="3.5" fill="#8a8a8a"/><rect x="551.45" y="3" width="0.7" height="3.5" fill="#8a8a8a"/><rect x="556.42" y="3" width="0.7" height="3.5" fill="#8a8a8a"/><rect x="561.38" y="3" width="0.7" height="3.5" fill="#8a8a8a"/><rect x="566.35" y="3" width="0.7" height="3.5" fill="#8a8a8a"/><rect x="571.32" y="3" width="0.7" height="3.5" fill="#8a8a8a"/><rect x="576.29" y="3" width="0.7" height="3.5" fill="#8a8a8a"/><rect x="581.26" y="3" width="0.7" height="3.5" fill="#8a8a8a"/><rect x="586.22" y="3" width="0.7" height="3.5" fill="#8a8a8a"/><rect x="591.19" y="0" width="0.9" height="7" fill="#d0d0d0"/><rect x="596.16" y="3" width="0.7" height="3.5" fill="#8a8a8a"/><rect x="601.13" y="3" width="0.7" height="3.5" fill="#8a8a8a"/><rect x="606.10" y="3" width="0.7" height="3.5" fill="#8a8a8a"/><rect x="611.06" y="3" width="0.7" height="3.5" fill="#8a8a8a"/><rect x="616.03" y="3" width="0.7" height="3.5" fill="#8a8a8a"/><rect x="621.00" y="3" width="0.7" height="3.5" fill="#8a8a8a"/><rect x="625.97" y="3" width="0.7" height="3.5" fill="#8a8a8a"/><rect x="630.94" y="3" width="0.7" height="3.5" fill="#8a8a8a"/><rect x="635.90" y="3" width="0.7" height="3.5" fill="#8a8a8a"/><rect x="640.87" y="3" width="0.7" height="3.5" fill="#8a8a8a"/><rect x="645.84" y="3" width="0.7" height="3.5" fill="#8a8a8a"/><rect x="650.81" y="3" width="0.7" height="3.5" fill="#8a8a8a"/><rect x="655.78" y="3" width="0.7" height="3.5" fill="#8a8a8a"/><rect x="660.74" y="3" width="0.7" height="3.5" fill="#8a8a8a"/><rect x="665.71" y="3" width="0.7" height="3.5" fill="#8a8a8a"/><rect x="670.68" y="3" width="0.7" height="3.5" fill="#8a8a8a"/><rect x="675.65" y="3" width="0.7" height="3.5" fill="#8a8a8a"/><rect x="680.62" y="3" width="0.7" height="3.5" fill="#8a8a8a"/><rect x="685.58" y="3" width="0.7" height="3.5" fill="#8a8a8a"/><rect x="690.55" y="3" width="0.7" height="3.5" fill="#8a8a8a"/><rect x="695.52" y="3" width="0.7" height="3.5" fill="#8a8a8a"/><rect x="700.49" y="3" width="0.7" height="3.5" fill="#8a8a8a"/><rect x="705.46" y="3" width="0.7" height="3.5" fill="#8a8a8a"/><rect x="710.42" y="0" width="0.9" height="7" fill="#d0d0d0"/><rect x="715.39" y="3" width="0.7" height="3.5" fill="#8a8a8a"/><rect x="720.36" y="3" width="0.7" height="3.5" fill="#8a8a8a"/><rect x="725.33" y="3" width="0.7" height="3.5" fill="#8a8a8a"/><rect x="730.30" y="3" width="0.7" height="3.5" fill="#8a8a8a"/><rect x="735.26" y="3" width="0.7" height="3.5" fill="#8a8a8a"/><rect x="740.23" y="3" width="0.7" height="3.5" fill="#8a8a8a"/><rect x="745.20" y="3" width="0.7" height="3.5" fill="#8a8a8a"/><rect x="750.17" y="3" width="0.7" height="3.5" fill="#8a8a8a"/><rect x="755.14" y="3" width="0.7" height="3.5" fill="#8a8a8a"/><rect x="760.10" y="3" width="0.7" height="3.5" fill="#8a8a8a"/><rect x="765.07" y="3" width="0.7" height="3.5" fill="#8a8a8a"/><rect x="770.04" y="3" width="0.7" height="3.5" fill="#8a8a8a"/><rect x="775.01" y="3" width="0.7" height="3.5" fill="#8a8a8a"/><rect x="779.98" y="3" width="0.7" height="3.5" fill="#8a8a8a"/><rect x="784.94" y="3" width="0.7" height="3.5" fill="#8a8a8a"/><rect x="789.91" y="3" width="0.7" height="3.5" fill="#8a8a8a"/><rect x="794.88" y="3" width="0.7" height="3.5" fill="#8a8a8a"/><rect x="799.85" y="3" width="0.7" height="3.5" fill="#8a8a8a"/><rect x="804.82" y="3" width="0.7" height="3.5" fill="#8a8a8a"/><rect x="809.78" y="3" width="0.7" height="3.5" fill="#8a8a8a"/><rect x="814.75" y="3" width="0.7" height="3.5" fill="#8a8a8a"/><rect x="819.72" y="3" width="0.7" height="3.5" fill="#8a8a8a"/><rect x="824.69" y="3" width="0.7" height="3.5" fill="#8a8a8a"/><rect x="829.66" y="0" width="0.9" height="7" fill="#d0d0d0"/><rect x="834.62" y="3" width="0.7" height="3.5" fill="#8a8a8a"/><rect x="839.59" y="3" width="0.7" height="3.5" fill="#8a8a8a"/><rect x="844.56" y="3" width="0.7" height="3.5" fill="#8a8a8a"/><rect x="849.53" y="3" width="0.7" height="3.5" fill="#8a8a8a"/><rect x="854.50" y="3" width="0.7" height="3.5" fill="#8a8a8a"/><rect x="859.46" y="3" width="0.7" height="3.5" fill="#8a8a8a"/><rect x="864.43" y="3" width="0.7" height="3.5" fill="#8a8a8a"/><rect x="869.40" y="3" width="0.7" height="3.5" fill="#8a8a8a"/><rect x="874.37" y="3" width="0.7" height="3.5" fill="#8a8a8a"/><rect x="879.34" y="3" width="0.7" height="3.5" fill="#8a8a8a"/><rect x="884.30" y="3" width="0.7" height="3.5" fill="#8a8a8a"/><rect x="889.27" y="3" width="0.7" height="3.5" fill="#8a8a8a"/><rect x="894.24" y="3" width="0.7" height="3.5" fill="#8a8a8a"/><rect x="899.21" y="3" width="0.7" height="3.5" fill="#8a8a8a"/><rect x="904.18" y="3" width="0.7" height="3.5" fill="#8a8a8a"/><rect x="909.14" y="3" width="0.7" height="3.5" fill="#8a8a8a"/><rect x="914.11" y="3" width="0.7" height="3.5" fill="#8a8a8a"/><rect x="919.08" y="3" width="0.7" height="3.5" fill="#8a8a8a"/><rect x="924.05" y="3" width="0.7" height="3.5" fill="#8a8a8a"/><rect x="929.02" y="3" width="0.7" height="3.5" fill="#8a8a8a"/><rect x="933.98" y="3" width="0.7" height="3.5" fill="#8a8a8a"/><rect x="938.95" y="3" width="0.7" height="3.5" fill="#8a8a8a"/><rect x="943.92" y="3" width="0.7" height="3.5" fill="#8a8a8a"/><rect x="948.89" y="0" width="0.9" height="7" fill="#d0d0d0"/><rect x="953.86" y="3" width="0.7" height="3.5" fill="#8a8a8a"/><rect x="958.82" y="3" width="0.7" height="3.5" fill="#8a8a8a"/><rect x="963.79" y="3" width="0.7" height="3.5" fill="#8a8a8a"/><rect x="968.76" y="3" width="0.7" height="3.5" fill="#8a8a8a"/><rect x="973.73" y="3" width="0.7" height="3.5" fill="#8a8a8a"/><rect x="978.70" y="3" width="0.7" height="3.5" fill="#8a8a8a"/><rect x="983.66" y="3" width="0.7" height="3.5" fill="#8a8a8a"/><rect x="988.63" y="3" width="0.7" height="3.5" fill="#8a8a8a"/><rect x="993.60" y="3" width="0.7" height="3.5" fill="#8a8a8a"/><rect x="998.57" y="3" width="0.7" height="3.5" fill="#8a8a8a"/><rect x="1003.54" y="3" width="0.7" height="3.5" fill="#8a8a8a"/><rect x="1008.50" y="3" width="0.7" height="3.5" fill="#8a8a8a"/><rect x="1013.47" y="3" width="0.7" height="3.5" fill="#8a8a8a"/><rect x="1018.44" y="3" width="0.7" height="3.5" fill="#8a8a8a"/><rect x="1023.41" y="3" width="0.7" height="3.5" fill="#8a8a8a"/><rect x="1028.38" y="3" width="0.7" height="3.5" fill="#8a8a8a"/><rect x="1033.34" y="3" width="0.7" height="3.5" fill="#8a8a8a"/><rect x="1038.31" y="3" width="0.7" height="3.5" fill="#8a8a8a"/><rect x="1043.28" y="3" width="0.7" height="3.5" fill="#8a8a8a"/><rect x="1048.25" y="3" width="0.7" height="3.5" fill="#8a8a8a"/><rect x="1053.22" y="3" width="0.7" height="3.5" fill="#8a8a8a"/><rect x="1058.18" y="3" width="0.7" height="3.5" fill="#8a8a8a"/><rect x="1063.15" y="3" width="0.7" height="3.5" fill="#8a8a8a"/><rect x="1068.12" y="0" width="0.9" height="7" fill="#d0d0d0"/><rect x="1073.09" y="3" width="0.7" height="3.5" fill="#8a8a8a"/><rect x="1078.06" y="3" width="0.7" height="3.5" fill="#8a8a8a"/><rect x="1083.02" y="3" width="0.7" height="3.5" fill="#8a8a8a"/><rect x="1087.99" y="3" width="0.7" height="3.5" fill="#8a8a8a"/><rect x="1092.96" y="3" width="0.7" height="3.5" fill="#8a8a8a"/><rect x="1097.93" y="3" width="0.7" height="3.5" fill="#8a8a8a"/><rect x="1102.90" y="3" width="0.7" height="3.5" fill="#8a8a8a"/><rect x="1107.86" y="3" width="0.7" height="3.5" fill="#8a8a8a"/><rect x="1112.83" y="3" width="0.7" height="3.5" fill="#8a8a8a"/><rect x="1117.80" y="3" width="0.7" height="3.5" fill="#8a8a8a"/><rect x="1122.77" y="3" width="0.7" height="3.5" fill="#8a8a8a"/><rect x="1127.74" y="3" width="0.7" height="3.5" fill="#8a8a8a"/><rect x="1132.70" y="3" width="0.7" height="3.5" fill="#8a8a8a"/><rect x="1137.67" y="3" width="0.7" height="3.5" fill="#8a8a8a"/><rect x="1142.64" y="3" width="0.7" height="3.5" fill="#8a8a8a"/><rect x="1147.61" y="3" width="0.7" height="3.5" fill="#8a8a8a"/><rect x="1152.58" y="3" width="0.7" height="3.5" fill="#8a8a8a"/><rect x="1157.54" y="3" width="0.7" height="3.5" fill="#8a8a8a"/><rect x="1162.51" y="3" width="0.7" height="3.5" fill="#8a8a8a"/><rect x="1167.48" y="3" width="0.7" height="3.5" fill="#8a8a8a"/><rect x="1172.45" y="3" width="0.7" height="3.5" fill="#8a8a8a"/><rect x="1177.42" y="3" width="0.7" height="3.5" fill="#8a8a8a"/><rect x="1182.38" y="3" width="0.7" height="3.5" fill="#8a8a8a"/><rect x="1187.35" y="0" width="0.9" height="7" fill="#d0d0d0"/></svg>
<div style="left:247.16px;top:769.50px;height:10px;line-height:10px;font-size:5.2px;color:#b8b8b8;white-space:nowrap;">24</div>
<div style="left:366.40px;top:769.50px;height:10px;line-height:10px;font-size:5.2px;color:#b8b8b8;white-space:nowrap;">48</div>
<div style="left:485.63px;top:769.50px;height:10px;line-height:10px;font-size:5.2px;color:#b8b8b8;white-space:nowrap;">72</div>
<div style="left:604.86px;top:769.50px;height:10px;line-height:10px;font-size:5.2px;color:#b8b8b8;white-space:nowrap;">96</div>
<div style="left:724.09px;top:769.50px;height:10px;line-height:10px;font-size:5.2px;color:#b8b8b8;white-space:nowrap;">120</div>
<div style="left:843.32px;top:769.50px;height:10px;line-height:10px;font-size:5.2px;color:#b8b8b8;white-space:nowrap;">144</div>
<div style="left:962.56px;top:769.50px;height:10px;line-height:10px;font-size:5.2px;color:#b8b8b8;white-space:nowrap;">168</div>
<div style="left:1081.79px;top:769.50px;height:10px;line-height:10px;font-size:5.2px;color:#b8b8b8;white-space:nowrap;">192</div>
<div style="left:1201.02px;top:769.50px;height:10px;line-height:10px;font-size:5.2px;color:#b8b8b8;white-space:nowrap;">216</div>
<div style="left:1320.25px;top:769.50px;height:10px;line-height:10px;font-size:5.2px;color:#b8b8b8;white-space:nowrap;">240</div>
<div style="left:133.5px;top:772.2px;width:13.3px;height:7.5px;background:#0c0c0c"></div>
<div style="left:133.5px;top:772.2px;width:0.9px;height:11px;background:#ddd"></div>
<div style="left:137.00px;top:770.30px;height:11px;line-height:11px;font-size:6px;color:#f0f0f0;white-space:nowrap;">1</div>
<svg style="left:133.5px;top:778.5px;" width="14" height="5" viewBox="0 0 14 5"><path d="M0.5 5 L4 1 H13.3" stroke="#cfe" stroke-width="0.8" fill="none"/></svg>
<div style="left:133.5px;top:796.5px;width:23.9px;height:11.1px;background:#1d1d1d"></div>
<div style="left:135.50px;top:796.00px;height:12px;line-height:12px;font-size:6.5px;color:#c8c8c8;white-space:nowrap;">1</div>
<div style="left:159.6px;top:796.5px;width:23.5px;height:11.1px;background:#141414"></div>
<div style="left:161.50px;top:796.00px;height:12px;line-height:12px;font-size:6.8px;color:#e8e8e8;white-space:nowrap;font-weight:bold;">1</div>
<div style="left:186px;top:801px;width:1086px;height:3.1px;background:#7c7c7c"></div>
<svg style="left:183.3px;top:799.6px;" width="4" height="6.4" viewBox="0 0 4 6.4"><path d="M0 0 V6.4 L3.8 3.2Z" fill="#b8b8b8"/></svg>
<svg style="left:1271.5px;top:799.6px;" width="4" height="6.4" viewBox="0 0 4 6.4"><path d="M4 0 V6.4 L0.2 3.2Z" fill="#b8b8b8"/></svg>
<div style="left:1276.5px;top:796.6px;width:23.3px;height:11px;background:#151515"></div>
<div style="left:1278.00px;top:796.20px;height:12px;line-height:12px;font-size:6.5px;color:#e0e0e0;white-space:nowrap;">248</div>
<div style="left:1302px;top:796.6px;width:23.5px;height:11px;background:#1d1d1d"></div>
<div style="left:1303.50px;top:796.20px;height:12px;line-height:12px;font-size:6.5px;color:#c8c8c8;white-space:nowrap;">240</div>
<svg style="left:1328px;top:781px;" width="20" height="20" viewBox="0 0 20 20"><circle cx="10" cy="10" r="9" fill="#2a2a2a" stroke="#333"/><text x="10" y="7" font-size="3.5" text-anchor="middle" fill="#555" font-family="Liberation Sans">AUTO</text><circle cx="11" cy="10" r="2" fill="none" stroke="#555"/><path d="M10 12 L7 16 M8 14 L9.5 15" stroke="#555"/></svg>
<div style="left:1349.5px;top:783.8px;width:9.8px;height:12.7px;background:#3a3a3a;border:1px solid #262626"></div>
<svg style="left:1352.4px;top:788.0px;" width="4" height="4" viewBox="0 0 4 4"><path d="M0.5 1 H3.5 L2.0 3.5Z" fill="#aaa"/></svg>
<div style="left:1363.3px;top:779.2px;width:12.7px;height:10.4px;background:#3c3c3c;border:1px solid #222"></div>
<svg style="left:1364px;top:780px;" width="11" height="9" viewBox="0 0 11 9"><rect x="0.5" y="1" width="1.5" height="7" fill="#d33"/><rect x="0.5" y="3" width="1.5" height="2" fill="#3a3"/><rect x="0.5" y="5.5" width="1.5" height="2" fill="#36d"/><circle cx="6" cy="4" r="2.5" fill="#ddd"/><path d="M4 7 H10" stroke="#ddd"/></svg>
<div style="left:1378.8px;top:776.3px;width:87.5px;height:13.8px;background:linear-gradient(#464646,#3a3a3a);border:1px solid #262626"></div>
<div style="left:1388.60px;top:777.20px;height:12px;line-height:12px;font-size:6.4px;color:#d0d0d0;white-space:nowrap;transform:scaleX(0.967);transform-origin:0 50%;">0 keys, 0/0 channels</div>
<svg style="left:1458.5px;top:780px;" width="6" height="5" viewBox="0 0 6 5"><path d="M0 5 L3 0 L6 5Z" fill="#888"/></svg>
<div style="left:1363.3px;top:792.4px;width:12.7px;height:12.1px;background:#111;border:1px solid #333"></div>
<svg style="left:1364px;top:793px;" width="11" height="11" viewBox="0 0 11 11"><path d="M1 6 Q3 2 5.5 6 T10 5" stroke="#e0a030" fill="none"/><circle cx="6" cy="4" r="2" fill="none" stroke="#6af"/></svg>
<div style="left:1378.8px;top:792.4px;width:79.4px;height:12.5px;background:linear-gradient(#464646,#3a3a3a);border:1px solid #262626"></div>
<div style="left:1458.2px;top:792.4px;width:8px;height:12.5px;background:#333"></div>
<svg style="left:1459.7px;top:795px;" width="5" height="7" viewBox="0 0 5 7"><path d="M0.5 3 L2.5 0.5 L4.5 3 Z M0.5 4 L2.5 6.5 L4.5 4 Z" fill="#aaa"/></svg>
<div style="left:1386.30px;top:792.60px;height:12px;line-height:12px;font-size:6.4px;color:#d0d0d0;white-space:nowrap;transform:scaleX(0.976);transform-origin:0 50%;">Key All Channels</div>
<div style="left:0px;top:811.4px;width:1469px;height:14.6px;background:#1a1a1a;border-top:1px solid #111"></div>
<div style="left:1303.5px;top:812px;width:165.5px;height:12.7px;background:#2c2c2c"></div>
<svg style="left:1305px;top:813px;" width="12" height="11" viewBox="0 0 12 11"><ellipse cx="6" cy="5" rx="5" ry="4" fill="#aaa"/><path d="M3 4 Q6 2 9 4 M3 6 Q6 8 9 6" stroke="#777" fill="none" stroke-width="0.6"/><path d="M9 9 L11 10 L9 11Z" fill="#999"/></svg>
<div style="left:1318.4px;top:812.3px;width:63.9px;height:12px;background:linear-gradient(#474747,#3b3b3b)"></div>
<div style="left:1382.3px;top:812.3px;width:8.7px;height:12px;background:#333"></div>
<svg style="left:1384.2px;top:815px;" width="5" height="7" viewBox="0 0 5 7"><path d="M0.5 3 L2.5 0.5 L4.5 3 Z M0.5 4 L2.5 6.5 L4.5 4 Z" fill="#999"/></svg>
<div style="left:1326.50px;top:812.30px;height:12px;line-height:12px;font-size:6.4px;color:#bcbcbc;white-space:nowrap;transform:scaleX(1.028);transform-origin:0 50%;">/obj/GEO_lemon...</div>
<div style="left:1392px;top:812.3px;width:15px;height:12px;background:#333"></div>
<svg style="left:1394px;top:813px;" width="11" height="10" viewBox="0 0 11 10"><path d="M2 5 A3.5 3.5 0 0 1 9 4 M9 5 A3.5 3.5 0 0 1 2 6" stroke="#555" stroke-width="1.2" fill="none"/></svg>
<div style="left:1407.6px;top:812.3px;width:51.8px;height:12px;background:linear-gradient(#474747,#3b3b3b)"></div>
<div style="left:1459.4px;top:812.3px;width:9.6px;height:12px;background:#333"></div>
<svg style="left:1461.5px;top:815px;" width="5" height="7" viewBox="0 0 5 7"><path d="M0.5 3 L2.5 0.5 L4.5 3 Z M0.5 4 L2.5 6.5 L4.5 4 Z" fill="#999"/></svg>
<div style="left:1415.60px;top:812.30px;height:12px;line-height:12px;font-size:6.4px;color:#d0d0d0;white-space:nowrap;">Auto Update</div>
<div style="left:1331px;top:731.7px;width:91.7px;height:48.3px;background:#fff;border-radius:7px"></div>
<div style="left:1337px;top:738px;width:34.5px;height:35.8px;background:#fff;border:1px solid #111;border-bottom:3.5px solid #111;border-radius:6px"></div>
<div style="left:1350.44px;width:7.61px;top:742.60px;height:12px;line-height:12px;font-size:6.5px;color:#111;white-space:nowrap;text-align:center;">3</div>
<div style="left:1344.12px;width:20.26px;top:755.60px;height:12px;line-height:12px;font-size:6.5px;color:#111;white-space:nowrap;text-align:center;">pg dn</div>
<div style="left:1384px;top:738px;width:32.799999999999955px;height:35.8px;background:#fff;border:1px solid #111;border-bottom:3.5px solid #111;border-radius:6px"></div>
<div style="left:1398.40px;width:4.00px;top:742.60px;height:12px;line-height:12px;font-size:6.5px;color:#111;white-space:nowrap;text-align:center;"></div>
<div style="left:1390.63px;width:19.54px;top:755.60px;height:12px;line-height:12px;font-size:6.5px;color:#111;white-space:nowrap;text-align:center;">Enter</div>
<svg style="left:1395.5px;top:743.3px;" width="10" height="8" viewBox="0 0 10 8"><path d="M2 1 H7 A2.6 2.6 0 0 1 7 6.2 H1.5" stroke="#111" stroke-width="1" fill="none"/><path d="M3.3 4.4 L1 6.2 L3.3 8" stroke="#111" stroke-width="1" fill="none"/></svg>
<svg style="left:1374px;top:754px;" width="7" height="7" viewBox="0 0 7 7"><path d="M3.5 0 V7 M0 3.5 H7" stroke="#111" stroke-width="0.9"/></svg>
</div></body></html>
